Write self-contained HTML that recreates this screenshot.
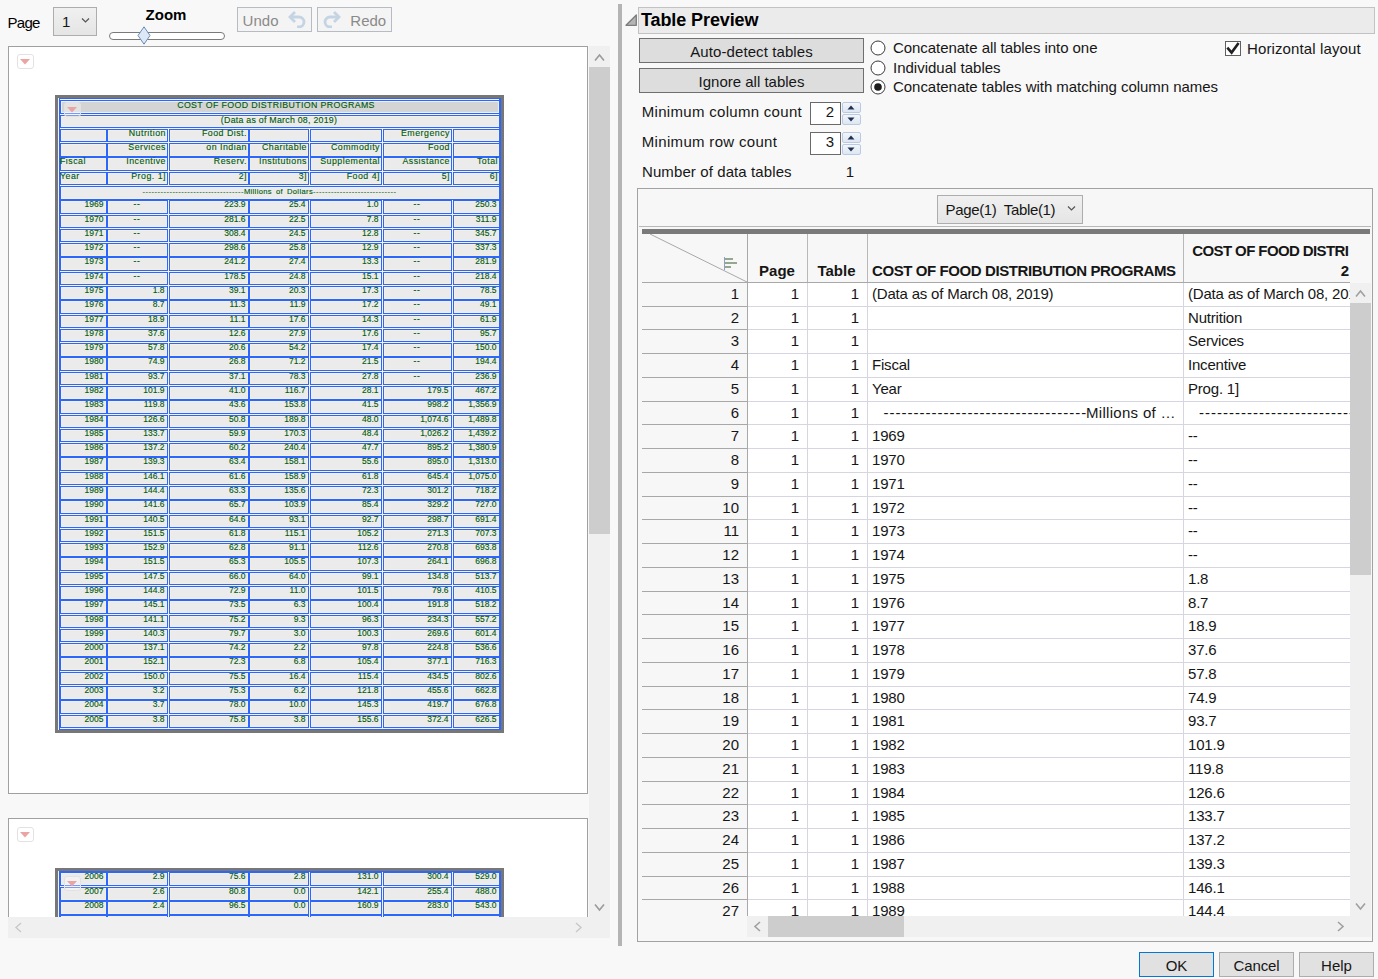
<!DOCTYPE html>
<html><head><meta charset="utf-8"><title>Table Preview</title>
<style>
html,body{margin:0;padding:0;}
body{width:1378px;height:979px;position:relative;overflow:hidden;background:#f8f8f8;font-family:"Liberation Sans",sans-serif;color:#000;}
.t{position:absolute;white-space:nowrap;}
.r{position:absolute;}
.c{position:absolute;box-sizing:border-box;border:1px solid #2b66ff;box-shadow:inset 0 0 0 1px #f1efe6;background:#ebebeb;}
</style></head><body>
<div class="t" style="top:15.10px;font-size:15px;line-height:15px;color:#000;letter-spacing:-0.7px;left:7.5px;">Page</div>
<div class="r" style="left:53px;top:7px;width:44px;height:29px;box-sizing:border-box;border:1px solid #adadad;background:linear-gradient(#f0f0f0,#e5e5e5);"></div>
<div class="t" style="top:14.30px;font-size:15px;line-height:15px;color:#161616;left:62px;">1</div>
<svg class="r" style="left:81px;top:17px" width="9" height="7" viewBox="0 0 9 7"><path d="M1 1.5 L4.5 5 L8 1.5" fill="none" stroke="#555" stroke-width="1.2"/></svg>
<div class="t" style="top:6.60px;font-size:15px;line-height:15px;color:#000;font-weight:bold;left:145.6px;">Zoom</div>
<div class="r" style="left:109px;top:32px;width:116px;height:8px;box-sizing:border-box;border:1px solid #7a7a7a;border-radius:4px;background:#fff;"></div>
<svg class="r" style="left:137px;top:26px" width="14" height="19" viewBox="0 0 14 19"><path d="M7 0.8 L13 9.5 L7 18.2 L1 9.5 Z" fill="#dce8f6" stroke="#6b8cb6" stroke-width="1"/></svg>
<div class="r" style="left:237px;top:7px;width:75px;height:25px;box-sizing:border-box;border:1px solid #b6bcc4;background:#f4f4f4;"></div>
<div class="t" style="top:12.50px;font-size:15px;line-height:15px;color:#8a8a8a;letter-spacing:0.1px;left:242.5px;">Undo</div>
<svg class="r" style="left:287px;top:10px" width="20" height="18" viewBox="0 0 20 18"><path d="M8 2 L3 7 L8 12" fill="none" stroke="#c4d4e4" stroke-width="2.8"/><path d="M3.5 7 H12 A5 5 0 0 1 12 17 H10" fill="none" stroke="#c4d4e4" stroke-width="2.8"/></svg>
<div class="r" style="left:317px;top:7px;width:75px;height:25px;box-sizing:border-box;border:1px solid #b6bcc4;background:#f4f4f4;"></div>
<div class="t" style="top:12.50px;font-size:15px;line-height:15px;color:#8a8a8a;left:350.3px;">Redo</div>
<svg class="r" style="left:322px;top:10px" width="20" height="18" viewBox="0 0 20 18"><path d="M12 2 L17 7 L12 12" fill="none" stroke="#c4d4e4" stroke-width="2.8"/><path d="M16.5 7 H8 A5 5 0 0 0 8 17 H10" fill="none" stroke="#c4d4e4" stroke-width="2.8"/></svg>
<div class="r" style="left:8px;top:46px;width:581px;height:871px;overflow:hidden;">
<div class="r" style="left:0px;top:0px;width:580px;height:748px;box-sizing:border-box;border:1px solid #a0a0a0;background:#fff;"></div>
<div class="r" style="left:9px;top:8px;width:17px;height:15px;box-sizing:border-box;border:1px solid #e2e2e2;border-radius:3px;background:rgba(255,255,255,0.35);"></div>
<svg class="r" style="left:12px;top:13px" width="10" height="6" viewBox="0 0 10 6"><path d="M0 0 H10 L5 5.5 Z" fill="#eba4a4"/></svg>
<div class="r" style="left:0px;top:772px;width:580px;height:120px;box-sizing:border-box;border:1px solid #a0a0a0;background:#fff;"></div>
<div class="r" style="left:9px;top:781px;width:17px;height:15px;box-sizing:border-box;border:1px solid #e2e2e2;border-radius:3px;background:rgba(255,255,255,0.35);"></div>
<svg class="r" style="left:12px;top:786px" width="10" height="6" viewBox="0 0 10 6"><path d="M0 0 H10 L5 5.5 Z" fill="#eba4a4"/></svg>
<div class="r" style="left:47px;top:49px;width:449px;height:638px;box-sizing:border-box;border:3px solid #777;background:#f6f2e6;"></div>
<div class="r" style="left:51px;top:52px;width:442px;height:632px;box-sizing:border-box;border:1px solid #2b66ff;border-right-width:2px;"></div>
<div class="c" style="left:52px;top:54px;width:440px;height:14px;background:#d4d4d4"></div>
<div class="t" style="top:54.55px;font-size:8.8px;line-height:8.8px;color:#005a0c;-webkit-text-stroke:0.12px #005a0c;letter-spacing:0.37px;left:-132px;width:800px;text-align:center;">COST OF FOOD DISTRIBUTION PROGRAMS</div>
<div class="c" style="left:52px;top:69px;width:440px;height:13px;background:#ebebeb"></div>
<div class="t" style="top:69.55px;font-size:8.8px;line-height:8.8px;color:#005a0c;-webkit-text-stroke:0.12px #005a0c;letter-spacing:0.25px;left:-129px;width:800px;text-align:center;">(Data as of March 08, 2019)</div>
<div class="c" style="left:52px;top:83px;width:47px;height:13px"></div>
<div class="c" style="left:99px;top:83px;width:61px;height:13px"></div>
<div class="t" style="top:82.75px;font-size:8.8px;line-height:8.8px;color:#005a0c;-webkit-text-stroke:0.12px #005a0c;letter-spacing:0.5px;left:-642.5px;width:800.5px;text-align:right;">Nutrition</div>
<div class="c" style="left:161px;top:83px;width:80px;height:13px"></div>
<div class="t" style="top:82.75px;font-size:8.8px;line-height:8.8px;color:#005a0c;-webkit-text-stroke:0.12px #005a0c;letter-spacing:0.5px;left:-561.5px;width:800.5px;text-align:right;">Food Dist.</div>
<div class="c" style="left:241px;top:83px;width:60px;height:13px"></div>
<div class="c" style="left:302px;top:83px;width:72px;height:13px"></div>
<div class="c" style="left:375px;top:83px;width:69px;height:13px"></div>
<div class="t" style="top:82.75px;font-size:8.8px;line-height:8.8px;color:#005a0c;-webkit-text-stroke:0.12px #005a0c;letter-spacing:0.5px;left:-358.5px;width:800.5px;text-align:right;">Emergency</div>
<div class="c" style="left:445px;top:83px;width:47px;height:13px"></div>
<div class="c" style="left:52px;top:97px;width:47px;height:14px"></div>
<div class="c" style="left:99px;top:97px;width:61px;height:14px"></div>
<div class="t" style="top:96.75px;font-size:8.8px;line-height:8.8px;color:#005a0c;-webkit-text-stroke:0.12px #005a0c;letter-spacing:0.5px;left:-642.5px;width:800.5px;text-align:right;">Services</div>
<div class="c" style="left:161px;top:97px;width:80px;height:14px"></div>
<div class="t" style="top:96.75px;font-size:8.8px;line-height:8.8px;color:#005a0c;-webkit-text-stroke:0.12px #005a0c;letter-spacing:0.5px;left:-561.5px;width:800.5px;text-align:right;">on Indian</div>
<div class="c" style="left:241px;top:97px;width:60px;height:14px"></div>
<div class="t" style="top:96.75px;font-size:8.8px;line-height:8.8px;color:#005a0c;-webkit-text-stroke:0.12px #005a0c;letter-spacing:0.5px;left:-501.5px;width:800.5px;text-align:right;">Charitable</div>
<div class="c" style="left:302px;top:97px;width:72px;height:14px"></div>
<div class="t" style="top:96.75px;font-size:8.8px;line-height:8.8px;color:#005a0c;-webkit-text-stroke:0.12px #005a0c;letter-spacing:0.5px;left:-428.5px;width:800.5px;text-align:right;">Commodity</div>
<div class="c" style="left:375px;top:97px;width:69px;height:14px"></div>
<div class="t" style="top:96.75px;font-size:8.8px;line-height:8.8px;color:#005a0c;-webkit-text-stroke:0.12px #005a0c;letter-spacing:0.5px;left:-358.5px;width:800.5px;text-align:right;">Food</div>
<div class="c" style="left:445px;top:97px;width:47px;height:14px"></div>
<div class="c" style="left:52px;top:111px;width:47px;height:14px"></div>
<div class="t" style="top:110.75px;font-size:8.8px;line-height:8.8px;color:#005a0c;-webkit-text-stroke:0.12px #005a0c;letter-spacing:0.5px;left:52px;">Fiscal</div>
<div class="c" style="left:99px;top:111px;width:61px;height:14px"></div>
<div class="t" style="top:110.75px;font-size:8.8px;line-height:8.8px;color:#005a0c;-webkit-text-stroke:0.12px #005a0c;letter-spacing:0.5px;left:-642.5px;width:800.5px;text-align:right;">Incentive</div>
<div class="c" style="left:161px;top:111px;width:80px;height:14px"></div>
<div class="t" style="top:110.75px;font-size:8.8px;line-height:8.8px;color:#005a0c;-webkit-text-stroke:0.12px #005a0c;letter-spacing:0.5px;left:-561.5px;width:800.5px;text-align:right;">Reserv.</div>
<div class="c" style="left:241px;top:111px;width:60px;height:14px"></div>
<div class="t" style="top:110.75px;font-size:8.8px;line-height:8.8px;color:#005a0c;-webkit-text-stroke:0.12px #005a0c;letter-spacing:0.5px;left:-501.5px;width:800.5px;text-align:right;">Institutions</div>
<div class="c" style="left:302px;top:111px;width:72px;height:14px"></div>
<div class="t" style="top:110.75px;font-size:8.8px;line-height:8.8px;color:#005a0c;-webkit-text-stroke:0.12px #005a0c;letter-spacing:0.5px;left:-428.5px;width:800.5px;text-align:right;">Supplemental</div>
<div class="c" style="left:375px;top:111px;width:69px;height:14px"></div>
<div class="t" style="top:110.75px;font-size:8.8px;line-height:8.8px;color:#005a0c;-webkit-text-stroke:0.12px #005a0c;letter-spacing:0.5px;left:-358.5px;width:800.5px;text-align:right;">Assistance</div>
<div class="c" style="left:445px;top:111px;width:47px;height:14px"></div>
<div class="t" style="top:110.75px;font-size:8.8px;line-height:8.8px;color:#005a0c;-webkit-text-stroke:0.12px #005a0c;letter-spacing:0.5px;left:-310.5px;width:800.5px;text-align:right;">Total</div>
<div class="c" style="left:52px;top:126px;width:47px;height:13px"></div>
<div class="t" style="top:125.75px;font-size:8.8px;line-height:8.8px;color:#005a0c;-webkit-text-stroke:0.12px #005a0c;letter-spacing:0.5px;left:52px;">Year</div>
<div class="c" style="left:99px;top:126px;width:61px;height:13px"></div>
<div class="t" style="top:125.75px;font-size:8.8px;line-height:8.8px;color:#005a0c;-webkit-text-stroke:0.12px #005a0c;letter-spacing:0.5px;left:-642.5px;width:800.5px;text-align:right;">Prog. 1]</div>
<div class="c" style="left:161px;top:126px;width:80px;height:13px"></div>
<div class="t" style="top:125.75px;font-size:8.8px;line-height:8.8px;color:#005a0c;-webkit-text-stroke:0.12px #005a0c;letter-spacing:0.5px;left:-561.5px;width:800.5px;text-align:right;">2]</div>
<div class="c" style="left:241px;top:126px;width:60px;height:13px"></div>
<div class="t" style="top:125.75px;font-size:8.8px;line-height:8.8px;color:#005a0c;-webkit-text-stroke:0.12px #005a0c;letter-spacing:0.5px;left:-501.5px;width:800.5px;text-align:right;">3]</div>
<div class="c" style="left:302px;top:126px;width:72px;height:13px"></div>
<div class="t" style="top:125.75px;font-size:8.8px;line-height:8.8px;color:#005a0c;-webkit-text-stroke:0.12px #005a0c;letter-spacing:0.5px;left:-428.5px;width:800.5px;text-align:right;">Food 4]</div>
<div class="c" style="left:375px;top:126px;width:69px;height:13px"></div>
<div class="t" style="top:125.75px;font-size:8.8px;line-height:8.8px;color:#005a0c;-webkit-text-stroke:0.12px #005a0c;letter-spacing:0.5px;left:-358.5px;width:800.5px;text-align:right;">5]</div>
<div class="c" style="left:445px;top:126px;width:47px;height:13px"></div>
<div class="t" style="top:125.75px;font-size:8.8px;line-height:8.8px;color:#005a0c;-webkit-text-stroke:0.12px #005a0c;letter-spacing:0.5px;left:-310.5px;width:800.5px;text-align:right;">6]</div>
<div class="c" style="left:52px;top:140px;width:440px;height:14px;background:#ebebeb"></div>
<div class="t" style="top:141.57px;font-size:7.6px;line-height:7.6px;color:#005a0c;-webkit-text-stroke:0.12px #005a0c;left:134.6px;"><span style="letter-spacing:0.45px">----------------------------------</span><span style="letter-spacing:0.35px;word-spacing:1.5px">Millions of Dollars</span><span style="letter-spacing:0.45px">----------------------------</span></div>
<div class="c" style="left:52px;top:154px;width:47px;height:14px"></div>
<div class="t" style="top:153.80px;font-size:8.5px;line-height:8.5px;color:#005a0c;-webkit-text-stroke:0.12px #005a0c;left:-704.5px;width:800px;text-align:right;">1969</div>
<div class="c" style="left:99px;top:154px;width:61px;height:14px"></div>
<div class="t" style="top:153.80px;font-size:8.5px;line-height:8.5px;color:#005a0c;-webkit-text-stroke:0.12px #005a0c;letter-spacing:0.6px;left:-271.0px;width:800px;text-align:center;">--</div>
<div class="c" style="left:161px;top:154px;width:80px;height:14px"></div>
<div class="t" style="top:153.80px;font-size:8.5px;line-height:8.5px;color:#005a0c;-webkit-text-stroke:0.12px #005a0c;left:-562.5px;width:800px;text-align:right;">223.9</div>
<div class="c" style="left:241px;top:154px;width:60px;height:14px"></div>
<div class="t" style="top:153.80px;font-size:8.5px;line-height:8.5px;color:#005a0c;-webkit-text-stroke:0.12px #005a0c;left:-502.5px;width:800px;text-align:right;">25.4</div>
<div class="c" style="left:302px;top:154px;width:72px;height:14px"></div>
<div class="t" style="top:153.80px;font-size:8.5px;line-height:8.5px;color:#005a0c;-webkit-text-stroke:0.12px #005a0c;left:-429.5px;width:800px;text-align:right;">1.0</div>
<div class="c" style="left:375px;top:154px;width:69px;height:14px"></div>
<div class="t" style="top:153.80px;font-size:8.5px;line-height:8.5px;color:#005a0c;-webkit-text-stroke:0.12px #005a0c;letter-spacing:0.6px;left:9.0px;width:800px;text-align:center;">--</div>
<div class="c" style="left:445px;top:154px;width:47px;height:14px"></div>
<div class="t" style="top:153.80px;font-size:8.5px;line-height:8.5px;color:#005a0c;-webkit-text-stroke:0.12px #005a0c;left:-311.5px;width:800px;text-align:right;">250.3</div>
<div class="c" style="left:52px;top:169px;width:47px;height:13px"></div>
<div class="t" style="top:168.80px;font-size:8.5px;line-height:8.5px;color:#005a0c;-webkit-text-stroke:0.12px #005a0c;left:-704.5px;width:800px;text-align:right;">1970</div>
<div class="c" style="left:99px;top:169px;width:61px;height:13px"></div>
<div class="t" style="top:168.80px;font-size:8.5px;line-height:8.5px;color:#005a0c;-webkit-text-stroke:0.12px #005a0c;letter-spacing:0.6px;left:-271.0px;width:800px;text-align:center;">--</div>
<div class="c" style="left:161px;top:169px;width:80px;height:13px"></div>
<div class="t" style="top:168.80px;font-size:8.5px;line-height:8.5px;color:#005a0c;-webkit-text-stroke:0.12px #005a0c;left:-562.5px;width:800px;text-align:right;">281.6</div>
<div class="c" style="left:241px;top:169px;width:60px;height:13px"></div>
<div class="t" style="top:168.80px;font-size:8.5px;line-height:8.5px;color:#005a0c;-webkit-text-stroke:0.12px #005a0c;left:-502.5px;width:800px;text-align:right;">22.5</div>
<div class="c" style="left:302px;top:169px;width:72px;height:13px"></div>
<div class="t" style="top:168.80px;font-size:8.5px;line-height:8.5px;color:#005a0c;-webkit-text-stroke:0.12px #005a0c;left:-429.5px;width:800px;text-align:right;">7.8</div>
<div class="c" style="left:375px;top:169px;width:69px;height:13px"></div>
<div class="t" style="top:168.80px;font-size:8.5px;line-height:8.5px;color:#005a0c;-webkit-text-stroke:0.12px #005a0c;letter-spacing:0.6px;left:9.0px;width:800px;text-align:center;">--</div>
<div class="c" style="left:445px;top:169px;width:47px;height:13px"></div>
<div class="t" style="top:168.80px;font-size:8.5px;line-height:8.5px;color:#005a0c;-webkit-text-stroke:0.12px #005a0c;left:-311.5px;width:800px;text-align:right;">311.9</div>
<div class="c" style="left:52px;top:183px;width:47px;height:13px"></div>
<div class="t" style="top:182.80px;font-size:8.5px;line-height:8.5px;color:#005a0c;-webkit-text-stroke:0.12px #005a0c;left:-704.5px;width:800px;text-align:right;">1971</div>
<div class="c" style="left:99px;top:183px;width:61px;height:13px"></div>
<div class="t" style="top:182.80px;font-size:8.5px;line-height:8.5px;color:#005a0c;-webkit-text-stroke:0.12px #005a0c;letter-spacing:0.6px;left:-271.0px;width:800px;text-align:center;">--</div>
<div class="c" style="left:161px;top:183px;width:80px;height:13px"></div>
<div class="t" style="top:182.80px;font-size:8.5px;line-height:8.5px;color:#005a0c;-webkit-text-stroke:0.12px #005a0c;left:-562.5px;width:800px;text-align:right;">308.4</div>
<div class="c" style="left:241px;top:183px;width:60px;height:13px"></div>
<div class="t" style="top:182.80px;font-size:8.5px;line-height:8.5px;color:#005a0c;-webkit-text-stroke:0.12px #005a0c;left:-502.5px;width:800px;text-align:right;">24.5</div>
<div class="c" style="left:302px;top:183px;width:72px;height:13px"></div>
<div class="t" style="top:182.80px;font-size:8.5px;line-height:8.5px;color:#005a0c;-webkit-text-stroke:0.12px #005a0c;left:-429.5px;width:800px;text-align:right;">12.8</div>
<div class="c" style="left:375px;top:183px;width:69px;height:13px"></div>
<div class="t" style="top:182.80px;font-size:8.5px;line-height:8.5px;color:#005a0c;-webkit-text-stroke:0.12px #005a0c;letter-spacing:0.6px;left:9.0px;width:800px;text-align:center;">--</div>
<div class="c" style="left:445px;top:183px;width:47px;height:13px"></div>
<div class="t" style="top:182.80px;font-size:8.5px;line-height:8.5px;color:#005a0c;-webkit-text-stroke:0.12px #005a0c;left:-311.5px;width:800px;text-align:right;">345.7</div>
<div class="c" style="left:52px;top:197px;width:47px;height:14px"></div>
<div class="t" style="top:196.80px;font-size:8.5px;line-height:8.5px;color:#005a0c;-webkit-text-stroke:0.12px #005a0c;left:-704.5px;width:800px;text-align:right;">1972</div>
<div class="c" style="left:99px;top:197px;width:61px;height:14px"></div>
<div class="t" style="top:196.80px;font-size:8.5px;line-height:8.5px;color:#005a0c;-webkit-text-stroke:0.12px #005a0c;letter-spacing:0.6px;left:-271.0px;width:800px;text-align:center;">--</div>
<div class="c" style="left:161px;top:197px;width:80px;height:14px"></div>
<div class="t" style="top:196.80px;font-size:8.5px;line-height:8.5px;color:#005a0c;-webkit-text-stroke:0.12px #005a0c;left:-562.5px;width:800px;text-align:right;">298.6</div>
<div class="c" style="left:241px;top:197px;width:60px;height:14px"></div>
<div class="t" style="top:196.80px;font-size:8.5px;line-height:8.5px;color:#005a0c;-webkit-text-stroke:0.12px #005a0c;left:-502.5px;width:800px;text-align:right;">25.8</div>
<div class="c" style="left:302px;top:197px;width:72px;height:14px"></div>
<div class="t" style="top:196.80px;font-size:8.5px;line-height:8.5px;color:#005a0c;-webkit-text-stroke:0.12px #005a0c;left:-429.5px;width:800px;text-align:right;">12.9</div>
<div class="c" style="left:375px;top:197px;width:69px;height:14px"></div>
<div class="t" style="top:196.80px;font-size:8.5px;line-height:8.5px;color:#005a0c;-webkit-text-stroke:0.12px #005a0c;letter-spacing:0.6px;left:9.0px;width:800px;text-align:center;">--</div>
<div class="c" style="left:445px;top:197px;width:47px;height:14px"></div>
<div class="t" style="top:196.80px;font-size:8.5px;line-height:8.5px;color:#005a0c;-webkit-text-stroke:0.12px #005a0c;left:-311.5px;width:800px;text-align:right;">337.3</div>
<div class="c" style="left:52px;top:211px;width:47px;height:14px"></div>
<div class="t" style="top:210.80px;font-size:8.5px;line-height:8.5px;color:#005a0c;-webkit-text-stroke:0.12px #005a0c;left:-704.5px;width:800px;text-align:right;">1973</div>
<div class="c" style="left:99px;top:211px;width:61px;height:14px"></div>
<div class="t" style="top:210.80px;font-size:8.5px;line-height:8.5px;color:#005a0c;-webkit-text-stroke:0.12px #005a0c;letter-spacing:0.6px;left:-271.0px;width:800px;text-align:center;">--</div>
<div class="c" style="left:161px;top:211px;width:80px;height:14px"></div>
<div class="t" style="top:210.80px;font-size:8.5px;line-height:8.5px;color:#005a0c;-webkit-text-stroke:0.12px #005a0c;left:-562.5px;width:800px;text-align:right;">241.2</div>
<div class="c" style="left:241px;top:211px;width:60px;height:14px"></div>
<div class="t" style="top:210.80px;font-size:8.5px;line-height:8.5px;color:#005a0c;-webkit-text-stroke:0.12px #005a0c;left:-502.5px;width:800px;text-align:right;">27.4</div>
<div class="c" style="left:302px;top:211px;width:72px;height:14px"></div>
<div class="t" style="top:210.80px;font-size:8.5px;line-height:8.5px;color:#005a0c;-webkit-text-stroke:0.12px #005a0c;left:-429.5px;width:800px;text-align:right;">13.3</div>
<div class="c" style="left:375px;top:211px;width:69px;height:14px"></div>
<div class="t" style="top:210.80px;font-size:8.5px;line-height:8.5px;color:#005a0c;-webkit-text-stroke:0.12px #005a0c;letter-spacing:0.6px;left:9.0px;width:800px;text-align:center;">--</div>
<div class="c" style="left:445px;top:211px;width:47px;height:14px"></div>
<div class="t" style="top:210.80px;font-size:8.5px;line-height:8.5px;color:#005a0c;-webkit-text-stroke:0.12px #005a0c;left:-311.5px;width:800px;text-align:right;">281.9</div>
<div class="c" style="left:52px;top:226px;width:47px;height:13px"></div>
<div class="t" style="top:225.80px;font-size:8.5px;line-height:8.5px;color:#005a0c;-webkit-text-stroke:0.12px #005a0c;left:-704.5px;width:800px;text-align:right;">1974</div>
<div class="c" style="left:99px;top:226px;width:61px;height:13px"></div>
<div class="t" style="top:225.80px;font-size:8.5px;line-height:8.5px;color:#005a0c;-webkit-text-stroke:0.12px #005a0c;letter-spacing:0.6px;left:-271.0px;width:800px;text-align:center;">--</div>
<div class="c" style="left:161px;top:226px;width:80px;height:13px"></div>
<div class="t" style="top:225.80px;font-size:8.5px;line-height:8.5px;color:#005a0c;-webkit-text-stroke:0.12px #005a0c;left:-562.5px;width:800px;text-align:right;">178.5</div>
<div class="c" style="left:241px;top:226px;width:60px;height:13px"></div>
<div class="t" style="top:225.80px;font-size:8.5px;line-height:8.5px;color:#005a0c;-webkit-text-stroke:0.12px #005a0c;left:-502.5px;width:800px;text-align:right;">24.8</div>
<div class="c" style="left:302px;top:226px;width:72px;height:13px"></div>
<div class="t" style="top:225.80px;font-size:8.5px;line-height:8.5px;color:#005a0c;-webkit-text-stroke:0.12px #005a0c;left:-429.5px;width:800px;text-align:right;">15.1</div>
<div class="c" style="left:375px;top:226px;width:69px;height:13px"></div>
<div class="t" style="top:225.80px;font-size:8.5px;line-height:8.5px;color:#005a0c;-webkit-text-stroke:0.12px #005a0c;letter-spacing:0.6px;left:9.0px;width:800px;text-align:center;">--</div>
<div class="c" style="left:445px;top:226px;width:47px;height:13px"></div>
<div class="t" style="top:225.80px;font-size:8.5px;line-height:8.5px;color:#005a0c;-webkit-text-stroke:0.12px #005a0c;left:-311.5px;width:800px;text-align:right;">218.4</div>
<div class="c" style="left:52px;top:240px;width:47px;height:14px"></div>
<div class="t" style="top:239.80px;font-size:8.5px;line-height:8.5px;color:#005a0c;-webkit-text-stroke:0.12px #005a0c;left:-704.5px;width:800px;text-align:right;">1975</div>
<div class="c" style="left:99px;top:240px;width:61px;height:14px"></div>
<div class="t" style="top:239.80px;font-size:8.5px;line-height:8.5px;color:#005a0c;-webkit-text-stroke:0.12px #005a0c;left:-643.5px;width:800px;text-align:right;">1.8</div>
<div class="c" style="left:161px;top:240px;width:80px;height:14px"></div>
<div class="t" style="top:239.80px;font-size:8.5px;line-height:8.5px;color:#005a0c;-webkit-text-stroke:0.12px #005a0c;left:-562.5px;width:800px;text-align:right;">39.1</div>
<div class="c" style="left:241px;top:240px;width:60px;height:14px"></div>
<div class="t" style="top:239.80px;font-size:8.5px;line-height:8.5px;color:#005a0c;-webkit-text-stroke:0.12px #005a0c;left:-502.5px;width:800px;text-align:right;">20.3</div>
<div class="c" style="left:302px;top:240px;width:72px;height:14px"></div>
<div class="t" style="top:239.80px;font-size:8.5px;line-height:8.5px;color:#005a0c;-webkit-text-stroke:0.12px #005a0c;left:-429.5px;width:800px;text-align:right;">17.3</div>
<div class="c" style="left:375px;top:240px;width:69px;height:14px"></div>
<div class="t" style="top:239.80px;font-size:8.5px;line-height:8.5px;color:#005a0c;-webkit-text-stroke:0.12px #005a0c;letter-spacing:0.6px;left:9.0px;width:800px;text-align:center;">--</div>
<div class="c" style="left:445px;top:240px;width:47px;height:14px"></div>
<div class="t" style="top:239.80px;font-size:8.5px;line-height:8.5px;color:#005a0c;-webkit-text-stroke:0.12px #005a0c;left:-311.5px;width:800px;text-align:right;">78.5</div>
<div class="c" style="left:52px;top:254px;width:47px;height:14px"></div>
<div class="t" style="top:253.80px;font-size:8.5px;line-height:8.5px;color:#005a0c;-webkit-text-stroke:0.12px #005a0c;left:-704.5px;width:800px;text-align:right;">1976</div>
<div class="c" style="left:99px;top:254px;width:61px;height:14px"></div>
<div class="t" style="top:253.80px;font-size:8.5px;line-height:8.5px;color:#005a0c;-webkit-text-stroke:0.12px #005a0c;left:-643.5px;width:800px;text-align:right;">8.7</div>
<div class="c" style="left:161px;top:254px;width:80px;height:14px"></div>
<div class="t" style="top:253.80px;font-size:8.5px;line-height:8.5px;color:#005a0c;-webkit-text-stroke:0.12px #005a0c;left:-562.5px;width:800px;text-align:right;">11.3</div>
<div class="c" style="left:241px;top:254px;width:60px;height:14px"></div>
<div class="t" style="top:253.80px;font-size:8.5px;line-height:8.5px;color:#005a0c;-webkit-text-stroke:0.12px #005a0c;left:-502.5px;width:800px;text-align:right;">11.9</div>
<div class="c" style="left:302px;top:254px;width:72px;height:14px"></div>
<div class="t" style="top:253.80px;font-size:8.5px;line-height:8.5px;color:#005a0c;-webkit-text-stroke:0.12px #005a0c;left:-429.5px;width:800px;text-align:right;">17.2</div>
<div class="c" style="left:375px;top:254px;width:69px;height:14px"></div>
<div class="t" style="top:253.80px;font-size:8.5px;line-height:8.5px;color:#005a0c;-webkit-text-stroke:0.12px #005a0c;letter-spacing:0.6px;left:9.0px;width:800px;text-align:center;">--</div>
<div class="c" style="left:445px;top:254px;width:47px;height:14px"></div>
<div class="t" style="top:253.80px;font-size:8.5px;line-height:8.5px;color:#005a0c;-webkit-text-stroke:0.12px #005a0c;left:-311.5px;width:800px;text-align:right;">49.1</div>
<div class="c" style="left:52px;top:269px;width:47px;height:13px"></div>
<div class="t" style="top:268.80px;font-size:8.5px;line-height:8.5px;color:#005a0c;-webkit-text-stroke:0.12px #005a0c;left:-704.5px;width:800px;text-align:right;">1977</div>
<div class="c" style="left:99px;top:269px;width:61px;height:13px"></div>
<div class="t" style="top:268.80px;font-size:8.5px;line-height:8.5px;color:#005a0c;-webkit-text-stroke:0.12px #005a0c;left:-643.5px;width:800px;text-align:right;">18.9</div>
<div class="c" style="left:161px;top:269px;width:80px;height:13px"></div>
<div class="t" style="top:268.80px;font-size:8.5px;line-height:8.5px;color:#005a0c;-webkit-text-stroke:0.12px #005a0c;left:-562.5px;width:800px;text-align:right;">11.1</div>
<div class="c" style="left:241px;top:269px;width:60px;height:13px"></div>
<div class="t" style="top:268.80px;font-size:8.5px;line-height:8.5px;color:#005a0c;-webkit-text-stroke:0.12px #005a0c;left:-502.5px;width:800px;text-align:right;">17.6</div>
<div class="c" style="left:302px;top:269px;width:72px;height:13px"></div>
<div class="t" style="top:268.80px;font-size:8.5px;line-height:8.5px;color:#005a0c;-webkit-text-stroke:0.12px #005a0c;left:-429.5px;width:800px;text-align:right;">14.3</div>
<div class="c" style="left:375px;top:269px;width:69px;height:13px"></div>
<div class="t" style="top:268.80px;font-size:8.5px;line-height:8.5px;color:#005a0c;-webkit-text-stroke:0.12px #005a0c;letter-spacing:0.6px;left:9.0px;width:800px;text-align:center;">--</div>
<div class="c" style="left:445px;top:269px;width:47px;height:13px"></div>
<div class="t" style="top:268.80px;font-size:8.5px;line-height:8.5px;color:#005a0c;-webkit-text-stroke:0.12px #005a0c;left:-311.5px;width:800px;text-align:right;">61.9</div>
<div class="c" style="left:52px;top:283px;width:47px;height:13px"></div>
<div class="t" style="top:282.80px;font-size:8.5px;line-height:8.5px;color:#005a0c;-webkit-text-stroke:0.12px #005a0c;left:-704.5px;width:800px;text-align:right;">1978</div>
<div class="c" style="left:99px;top:283px;width:61px;height:13px"></div>
<div class="t" style="top:282.80px;font-size:8.5px;line-height:8.5px;color:#005a0c;-webkit-text-stroke:0.12px #005a0c;left:-643.5px;width:800px;text-align:right;">37.6</div>
<div class="c" style="left:161px;top:283px;width:80px;height:13px"></div>
<div class="t" style="top:282.80px;font-size:8.5px;line-height:8.5px;color:#005a0c;-webkit-text-stroke:0.12px #005a0c;left:-562.5px;width:800px;text-align:right;">12.6</div>
<div class="c" style="left:241px;top:283px;width:60px;height:13px"></div>
<div class="t" style="top:282.80px;font-size:8.5px;line-height:8.5px;color:#005a0c;-webkit-text-stroke:0.12px #005a0c;left:-502.5px;width:800px;text-align:right;">27.9</div>
<div class="c" style="left:302px;top:283px;width:72px;height:13px"></div>
<div class="t" style="top:282.80px;font-size:8.5px;line-height:8.5px;color:#005a0c;-webkit-text-stroke:0.12px #005a0c;left:-429.5px;width:800px;text-align:right;">17.6</div>
<div class="c" style="left:375px;top:283px;width:69px;height:13px"></div>
<div class="t" style="top:282.80px;font-size:8.5px;line-height:8.5px;color:#005a0c;-webkit-text-stroke:0.12px #005a0c;letter-spacing:0.6px;left:9.0px;width:800px;text-align:center;">--</div>
<div class="c" style="left:445px;top:283px;width:47px;height:13px"></div>
<div class="t" style="top:282.80px;font-size:8.5px;line-height:8.5px;color:#005a0c;-webkit-text-stroke:0.12px #005a0c;left:-311.5px;width:800px;text-align:right;">95.7</div>
<div class="c" style="left:52px;top:297px;width:47px;height:14px"></div>
<div class="t" style="top:296.80px;font-size:8.5px;line-height:8.5px;color:#005a0c;-webkit-text-stroke:0.12px #005a0c;left:-704.5px;width:800px;text-align:right;">1979</div>
<div class="c" style="left:99px;top:297px;width:61px;height:14px"></div>
<div class="t" style="top:296.80px;font-size:8.5px;line-height:8.5px;color:#005a0c;-webkit-text-stroke:0.12px #005a0c;left:-643.5px;width:800px;text-align:right;">57.8</div>
<div class="c" style="left:161px;top:297px;width:80px;height:14px"></div>
<div class="t" style="top:296.80px;font-size:8.5px;line-height:8.5px;color:#005a0c;-webkit-text-stroke:0.12px #005a0c;left:-562.5px;width:800px;text-align:right;">20.6</div>
<div class="c" style="left:241px;top:297px;width:60px;height:14px"></div>
<div class="t" style="top:296.80px;font-size:8.5px;line-height:8.5px;color:#005a0c;-webkit-text-stroke:0.12px #005a0c;left:-502.5px;width:800px;text-align:right;">54.2</div>
<div class="c" style="left:302px;top:297px;width:72px;height:14px"></div>
<div class="t" style="top:296.80px;font-size:8.5px;line-height:8.5px;color:#005a0c;-webkit-text-stroke:0.12px #005a0c;left:-429.5px;width:800px;text-align:right;">17.4</div>
<div class="c" style="left:375px;top:297px;width:69px;height:14px"></div>
<div class="t" style="top:296.80px;font-size:8.5px;line-height:8.5px;color:#005a0c;-webkit-text-stroke:0.12px #005a0c;letter-spacing:0.6px;left:9.0px;width:800px;text-align:center;">--</div>
<div class="c" style="left:445px;top:297px;width:47px;height:14px"></div>
<div class="t" style="top:296.80px;font-size:8.5px;line-height:8.5px;color:#005a0c;-webkit-text-stroke:0.12px #005a0c;left:-311.5px;width:800px;text-align:right;">150.0</div>
<div class="c" style="left:52px;top:311px;width:47px;height:14px"></div>
<div class="t" style="top:310.80px;font-size:8.5px;line-height:8.5px;color:#005a0c;-webkit-text-stroke:0.12px #005a0c;left:-704.5px;width:800px;text-align:right;">1980</div>
<div class="c" style="left:99px;top:311px;width:61px;height:14px"></div>
<div class="t" style="top:310.80px;font-size:8.5px;line-height:8.5px;color:#005a0c;-webkit-text-stroke:0.12px #005a0c;left:-643.5px;width:800px;text-align:right;">74.9</div>
<div class="c" style="left:161px;top:311px;width:80px;height:14px"></div>
<div class="t" style="top:310.80px;font-size:8.5px;line-height:8.5px;color:#005a0c;-webkit-text-stroke:0.12px #005a0c;left:-562.5px;width:800px;text-align:right;">26.8</div>
<div class="c" style="left:241px;top:311px;width:60px;height:14px"></div>
<div class="t" style="top:310.80px;font-size:8.5px;line-height:8.5px;color:#005a0c;-webkit-text-stroke:0.12px #005a0c;left:-502.5px;width:800px;text-align:right;">71.2</div>
<div class="c" style="left:302px;top:311px;width:72px;height:14px"></div>
<div class="t" style="top:310.80px;font-size:8.5px;line-height:8.5px;color:#005a0c;-webkit-text-stroke:0.12px #005a0c;left:-429.5px;width:800px;text-align:right;">21.5</div>
<div class="c" style="left:375px;top:311px;width:69px;height:14px"></div>
<div class="t" style="top:310.80px;font-size:8.5px;line-height:8.5px;color:#005a0c;-webkit-text-stroke:0.12px #005a0c;letter-spacing:0.6px;left:9.0px;width:800px;text-align:center;">--</div>
<div class="c" style="left:445px;top:311px;width:47px;height:14px"></div>
<div class="t" style="top:310.80px;font-size:8.5px;line-height:8.5px;color:#005a0c;-webkit-text-stroke:0.12px #005a0c;left:-311.5px;width:800px;text-align:right;">194.4</div>
<div class="c" style="left:52px;top:326px;width:47px;height:13px"></div>
<div class="t" style="top:325.80px;font-size:8.5px;line-height:8.5px;color:#005a0c;-webkit-text-stroke:0.12px #005a0c;left:-704.5px;width:800px;text-align:right;">1981</div>
<div class="c" style="left:99px;top:326px;width:61px;height:13px"></div>
<div class="t" style="top:325.80px;font-size:8.5px;line-height:8.5px;color:#005a0c;-webkit-text-stroke:0.12px #005a0c;left:-643.5px;width:800px;text-align:right;">93.7</div>
<div class="c" style="left:161px;top:326px;width:80px;height:13px"></div>
<div class="t" style="top:325.80px;font-size:8.5px;line-height:8.5px;color:#005a0c;-webkit-text-stroke:0.12px #005a0c;left:-562.5px;width:800px;text-align:right;">37.1</div>
<div class="c" style="left:241px;top:326px;width:60px;height:13px"></div>
<div class="t" style="top:325.80px;font-size:8.5px;line-height:8.5px;color:#005a0c;-webkit-text-stroke:0.12px #005a0c;left:-502.5px;width:800px;text-align:right;">78.3</div>
<div class="c" style="left:302px;top:326px;width:72px;height:13px"></div>
<div class="t" style="top:325.80px;font-size:8.5px;line-height:8.5px;color:#005a0c;-webkit-text-stroke:0.12px #005a0c;left:-429.5px;width:800px;text-align:right;">27.8</div>
<div class="c" style="left:375px;top:326px;width:69px;height:13px"></div>
<div class="t" style="top:325.80px;font-size:8.5px;line-height:8.5px;color:#005a0c;-webkit-text-stroke:0.12px #005a0c;letter-spacing:0.6px;left:9.0px;width:800px;text-align:center;">--</div>
<div class="c" style="left:445px;top:326px;width:47px;height:13px"></div>
<div class="t" style="top:325.80px;font-size:8.5px;line-height:8.5px;color:#005a0c;-webkit-text-stroke:0.12px #005a0c;left:-311.5px;width:800px;text-align:right;">236.9</div>
<div class="c" style="left:52px;top:340px;width:47px;height:14px"></div>
<div class="t" style="top:339.80px;font-size:8.5px;line-height:8.5px;color:#005a0c;-webkit-text-stroke:0.12px #005a0c;left:-704.5px;width:800px;text-align:right;">1982</div>
<div class="c" style="left:99px;top:340px;width:61px;height:14px"></div>
<div class="t" style="top:339.80px;font-size:8.5px;line-height:8.5px;color:#005a0c;-webkit-text-stroke:0.12px #005a0c;left:-643.5px;width:800px;text-align:right;">101.9</div>
<div class="c" style="left:161px;top:340px;width:80px;height:14px"></div>
<div class="t" style="top:339.80px;font-size:8.5px;line-height:8.5px;color:#005a0c;-webkit-text-stroke:0.12px #005a0c;left:-562.5px;width:800px;text-align:right;">41.0</div>
<div class="c" style="left:241px;top:340px;width:60px;height:14px"></div>
<div class="t" style="top:339.80px;font-size:8.5px;line-height:8.5px;color:#005a0c;-webkit-text-stroke:0.12px #005a0c;left:-502.5px;width:800px;text-align:right;">116.7</div>
<div class="c" style="left:302px;top:340px;width:72px;height:14px"></div>
<div class="t" style="top:339.80px;font-size:8.5px;line-height:8.5px;color:#005a0c;-webkit-text-stroke:0.12px #005a0c;left:-429.5px;width:800px;text-align:right;">28.1</div>
<div class="c" style="left:375px;top:340px;width:69px;height:14px"></div>
<div class="t" style="top:339.80px;font-size:8.5px;line-height:8.5px;color:#005a0c;-webkit-text-stroke:0.12px #005a0c;left:-359.5px;width:800px;text-align:right;">179.5</div>
<div class="c" style="left:445px;top:340px;width:47px;height:14px"></div>
<div class="t" style="top:339.80px;font-size:8.5px;line-height:8.5px;color:#005a0c;-webkit-text-stroke:0.12px #005a0c;left:-311.5px;width:800px;text-align:right;">467.2</div>
<div class="c" style="left:52px;top:354px;width:47px;height:14px"></div>
<div class="t" style="top:353.80px;font-size:8.5px;line-height:8.5px;color:#005a0c;-webkit-text-stroke:0.12px #005a0c;left:-704.5px;width:800px;text-align:right;">1983</div>
<div class="c" style="left:99px;top:354px;width:61px;height:14px"></div>
<div class="t" style="top:353.80px;font-size:8.5px;line-height:8.5px;color:#005a0c;-webkit-text-stroke:0.12px #005a0c;left:-643.5px;width:800px;text-align:right;">119.8</div>
<div class="c" style="left:161px;top:354px;width:80px;height:14px"></div>
<div class="t" style="top:353.80px;font-size:8.5px;line-height:8.5px;color:#005a0c;-webkit-text-stroke:0.12px #005a0c;left:-562.5px;width:800px;text-align:right;">43.6</div>
<div class="c" style="left:241px;top:354px;width:60px;height:14px"></div>
<div class="t" style="top:353.80px;font-size:8.5px;line-height:8.5px;color:#005a0c;-webkit-text-stroke:0.12px #005a0c;left:-502.5px;width:800px;text-align:right;">153.8</div>
<div class="c" style="left:302px;top:354px;width:72px;height:14px"></div>
<div class="t" style="top:353.80px;font-size:8.5px;line-height:8.5px;color:#005a0c;-webkit-text-stroke:0.12px #005a0c;left:-429.5px;width:800px;text-align:right;">41.5</div>
<div class="c" style="left:375px;top:354px;width:69px;height:14px"></div>
<div class="t" style="top:353.80px;font-size:8.5px;line-height:8.5px;color:#005a0c;-webkit-text-stroke:0.12px #005a0c;left:-359.5px;width:800px;text-align:right;">998.2</div>
<div class="c" style="left:445px;top:354px;width:47px;height:14px"></div>
<div class="t" style="top:353.80px;font-size:8.5px;line-height:8.5px;color:#005a0c;-webkit-text-stroke:0.12px #005a0c;left:-311.5px;width:800px;text-align:right;">1,356.9</div>
<div class="c" style="left:52px;top:369px;width:47px;height:13px"></div>
<div class="t" style="top:368.80px;font-size:8.5px;line-height:8.5px;color:#005a0c;-webkit-text-stroke:0.12px #005a0c;left:-704.5px;width:800px;text-align:right;">1984</div>
<div class="c" style="left:99px;top:369px;width:61px;height:13px"></div>
<div class="t" style="top:368.80px;font-size:8.5px;line-height:8.5px;color:#005a0c;-webkit-text-stroke:0.12px #005a0c;left:-643.5px;width:800px;text-align:right;">126.6</div>
<div class="c" style="left:161px;top:369px;width:80px;height:13px"></div>
<div class="t" style="top:368.80px;font-size:8.5px;line-height:8.5px;color:#005a0c;-webkit-text-stroke:0.12px #005a0c;left:-562.5px;width:800px;text-align:right;">50.8</div>
<div class="c" style="left:241px;top:369px;width:60px;height:13px"></div>
<div class="t" style="top:368.80px;font-size:8.5px;line-height:8.5px;color:#005a0c;-webkit-text-stroke:0.12px #005a0c;left:-502.5px;width:800px;text-align:right;">189.8</div>
<div class="c" style="left:302px;top:369px;width:72px;height:13px"></div>
<div class="t" style="top:368.80px;font-size:8.5px;line-height:8.5px;color:#005a0c;-webkit-text-stroke:0.12px #005a0c;left:-429.5px;width:800px;text-align:right;">48.0</div>
<div class="c" style="left:375px;top:369px;width:69px;height:13px"></div>
<div class="t" style="top:368.80px;font-size:8.5px;line-height:8.5px;color:#005a0c;-webkit-text-stroke:0.12px #005a0c;left:-359.5px;width:800px;text-align:right;">1,074.6</div>
<div class="c" style="left:445px;top:369px;width:47px;height:13px"></div>
<div class="t" style="top:368.80px;font-size:8.5px;line-height:8.5px;color:#005a0c;-webkit-text-stroke:0.12px #005a0c;left:-311.5px;width:800px;text-align:right;">1,489.8</div>
<div class="c" style="left:52px;top:383px;width:47px;height:13px"></div>
<div class="t" style="top:382.80px;font-size:8.5px;line-height:8.5px;color:#005a0c;-webkit-text-stroke:0.12px #005a0c;left:-704.5px;width:800px;text-align:right;">1985</div>
<div class="c" style="left:99px;top:383px;width:61px;height:13px"></div>
<div class="t" style="top:382.80px;font-size:8.5px;line-height:8.5px;color:#005a0c;-webkit-text-stroke:0.12px #005a0c;left:-643.5px;width:800px;text-align:right;">133.7</div>
<div class="c" style="left:161px;top:383px;width:80px;height:13px"></div>
<div class="t" style="top:382.80px;font-size:8.5px;line-height:8.5px;color:#005a0c;-webkit-text-stroke:0.12px #005a0c;left:-562.5px;width:800px;text-align:right;">59.9</div>
<div class="c" style="left:241px;top:383px;width:60px;height:13px"></div>
<div class="t" style="top:382.80px;font-size:8.5px;line-height:8.5px;color:#005a0c;-webkit-text-stroke:0.12px #005a0c;left:-502.5px;width:800px;text-align:right;">170.3</div>
<div class="c" style="left:302px;top:383px;width:72px;height:13px"></div>
<div class="t" style="top:382.80px;font-size:8.5px;line-height:8.5px;color:#005a0c;-webkit-text-stroke:0.12px #005a0c;left:-429.5px;width:800px;text-align:right;">48.4</div>
<div class="c" style="left:375px;top:383px;width:69px;height:13px"></div>
<div class="t" style="top:382.80px;font-size:8.5px;line-height:8.5px;color:#005a0c;-webkit-text-stroke:0.12px #005a0c;left:-359.5px;width:800px;text-align:right;">1,026.2</div>
<div class="c" style="left:445px;top:383px;width:47px;height:13px"></div>
<div class="t" style="top:382.80px;font-size:8.5px;line-height:8.5px;color:#005a0c;-webkit-text-stroke:0.12px #005a0c;left:-311.5px;width:800px;text-align:right;">1,439.2</div>
<div class="c" style="left:52px;top:397px;width:47px;height:14px"></div>
<div class="t" style="top:396.80px;font-size:8.5px;line-height:8.5px;color:#005a0c;-webkit-text-stroke:0.12px #005a0c;left:-704.5px;width:800px;text-align:right;">1986</div>
<div class="c" style="left:99px;top:397px;width:61px;height:14px"></div>
<div class="t" style="top:396.80px;font-size:8.5px;line-height:8.5px;color:#005a0c;-webkit-text-stroke:0.12px #005a0c;left:-643.5px;width:800px;text-align:right;">137.2</div>
<div class="c" style="left:161px;top:397px;width:80px;height:14px"></div>
<div class="t" style="top:396.80px;font-size:8.5px;line-height:8.5px;color:#005a0c;-webkit-text-stroke:0.12px #005a0c;left:-562.5px;width:800px;text-align:right;">60.2</div>
<div class="c" style="left:241px;top:397px;width:60px;height:14px"></div>
<div class="t" style="top:396.80px;font-size:8.5px;line-height:8.5px;color:#005a0c;-webkit-text-stroke:0.12px #005a0c;left:-502.5px;width:800px;text-align:right;">240.4</div>
<div class="c" style="left:302px;top:397px;width:72px;height:14px"></div>
<div class="t" style="top:396.80px;font-size:8.5px;line-height:8.5px;color:#005a0c;-webkit-text-stroke:0.12px #005a0c;left:-429.5px;width:800px;text-align:right;">47.7</div>
<div class="c" style="left:375px;top:397px;width:69px;height:14px"></div>
<div class="t" style="top:396.80px;font-size:8.5px;line-height:8.5px;color:#005a0c;-webkit-text-stroke:0.12px #005a0c;left:-359.5px;width:800px;text-align:right;">895.2</div>
<div class="c" style="left:445px;top:397px;width:47px;height:14px"></div>
<div class="t" style="top:396.80px;font-size:8.5px;line-height:8.5px;color:#005a0c;-webkit-text-stroke:0.12px #005a0c;left:-311.5px;width:800px;text-align:right;">1,380.9</div>
<div class="c" style="left:52px;top:411px;width:47px;height:14px"></div>
<div class="t" style="top:410.80px;font-size:8.5px;line-height:8.5px;color:#005a0c;-webkit-text-stroke:0.12px #005a0c;left:-704.5px;width:800px;text-align:right;">1987</div>
<div class="c" style="left:99px;top:411px;width:61px;height:14px"></div>
<div class="t" style="top:410.80px;font-size:8.5px;line-height:8.5px;color:#005a0c;-webkit-text-stroke:0.12px #005a0c;left:-643.5px;width:800px;text-align:right;">139.3</div>
<div class="c" style="left:161px;top:411px;width:80px;height:14px"></div>
<div class="t" style="top:410.80px;font-size:8.5px;line-height:8.5px;color:#005a0c;-webkit-text-stroke:0.12px #005a0c;left:-562.5px;width:800px;text-align:right;">63.4</div>
<div class="c" style="left:241px;top:411px;width:60px;height:14px"></div>
<div class="t" style="top:410.80px;font-size:8.5px;line-height:8.5px;color:#005a0c;-webkit-text-stroke:0.12px #005a0c;left:-502.5px;width:800px;text-align:right;">158.1</div>
<div class="c" style="left:302px;top:411px;width:72px;height:14px"></div>
<div class="t" style="top:410.80px;font-size:8.5px;line-height:8.5px;color:#005a0c;-webkit-text-stroke:0.12px #005a0c;left:-429.5px;width:800px;text-align:right;">55.6</div>
<div class="c" style="left:375px;top:411px;width:69px;height:14px"></div>
<div class="t" style="top:410.80px;font-size:8.5px;line-height:8.5px;color:#005a0c;-webkit-text-stroke:0.12px #005a0c;left:-359.5px;width:800px;text-align:right;">895.0</div>
<div class="c" style="left:445px;top:411px;width:47px;height:14px"></div>
<div class="t" style="top:410.80px;font-size:8.5px;line-height:8.5px;color:#005a0c;-webkit-text-stroke:0.12px #005a0c;left:-311.5px;width:800px;text-align:right;">1,313.0</div>
<div class="c" style="left:52px;top:426px;width:47px;height:13px"></div>
<div class="t" style="top:425.80px;font-size:8.5px;line-height:8.5px;color:#005a0c;-webkit-text-stroke:0.12px #005a0c;left:-704.5px;width:800px;text-align:right;">1988</div>
<div class="c" style="left:99px;top:426px;width:61px;height:13px"></div>
<div class="t" style="top:425.80px;font-size:8.5px;line-height:8.5px;color:#005a0c;-webkit-text-stroke:0.12px #005a0c;left:-643.5px;width:800px;text-align:right;">146.1</div>
<div class="c" style="left:161px;top:426px;width:80px;height:13px"></div>
<div class="t" style="top:425.80px;font-size:8.5px;line-height:8.5px;color:#005a0c;-webkit-text-stroke:0.12px #005a0c;left:-562.5px;width:800px;text-align:right;">61.6</div>
<div class="c" style="left:241px;top:426px;width:60px;height:13px"></div>
<div class="t" style="top:425.80px;font-size:8.5px;line-height:8.5px;color:#005a0c;-webkit-text-stroke:0.12px #005a0c;left:-502.5px;width:800px;text-align:right;">158.9</div>
<div class="c" style="left:302px;top:426px;width:72px;height:13px"></div>
<div class="t" style="top:425.80px;font-size:8.5px;line-height:8.5px;color:#005a0c;-webkit-text-stroke:0.12px #005a0c;left:-429.5px;width:800px;text-align:right;">61.8</div>
<div class="c" style="left:375px;top:426px;width:69px;height:13px"></div>
<div class="t" style="top:425.80px;font-size:8.5px;line-height:8.5px;color:#005a0c;-webkit-text-stroke:0.12px #005a0c;left:-359.5px;width:800px;text-align:right;">645.4</div>
<div class="c" style="left:445px;top:426px;width:47px;height:13px"></div>
<div class="t" style="top:425.80px;font-size:8.5px;line-height:8.5px;color:#005a0c;-webkit-text-stroke:0.12px #005a0c;left:-311.5px;width:800px;text-align:right;">1,075.0</div>
<div class="c" style="left:52px;top:440px;width:47px;height:14px"></div>
<div class="t" style="top:439.80px;font-size:8.5px;line-height:8.5px;color:#005a0c;-webkit-text-stroke:0.12px #005a0c;left:-704.5px;width:800px;text-align:right;">1989</div>
<div class="c" style="left:99px;top:440px;width:61px;height:14px"></div>
<div class="t" style="top:439.80px;font-size:8.5px;line-height:8.5px;color:#005a0c;-webkit-text-stroke:0.12px #005a0c;left:-643.5px;width:800px;text-align:right;">144.4</div>
<div class="c" style="left:161px;top:440px;width:80px;height:14px"></div>
<div class="t" style="top:439.80px;font-size:8.5px;line-height:8.5px;color:#005a0c;-webkit-text-stroke:0.12px #005a0c;left:-562.5px;width:800px;text-align:right;">63.3</div>
<div class="c" style="left:241px;top:440px;width:60px;height:14px"></div>
<div class="t" style="top:439.80px;font-size:8.5px;line-height:8.5px;color:#005a0c;-webkit-text-stroke:0.12px #005a0c;left:-502.5px;width:800px;text-align:right;">135.6</div>
<div class="c" style="left:302px;top:440px;width:72px;height:14px"></div>
<div class="t" style="top:439.80px;font-size:8.5px;line-height:8.5px;color:#005a0c;-webkit-text-stroke:0.12px #005a0c;left:-429.5px;width:800px;text-align:right;">72.3</div>
<div class="c" style="left:375px;top:440px;width:69px;height:14px"></div>
<div class="t" style="top:439.80px;font-size:8.5px;line-height:8.5px;color:#005a0c;-webkit-text-stroke:0.12px #005a0c;left:-359.5px;width:800px;text-align:right;">301.2</div>
<div class="c" style="left:445px;top:440px;width:47px;height:14px"></div>
<div class="t" style="top:439.80px;font-size:8.5px;line-height:8.5px;color:#005a0c;-webkit-text-stroke:0.12px #005a0c;left:-311.5px;width:800px;text-align:right;">718.2</div>
<div class="c" style="left:52px;top:454px;width:47px;height:14px"></div>
<div class="t" style="top:453.80px;font-size:8.5px;line-height:8.5px;color:#005a0c;-webkit-text-stroke:0.12px #005a0c;left:-704.5px;width:800px;text-align:right;">1990</div>
<div class="c" style="left:99px;top:454px;width:61px;height:14px"></div>
<div class="t" style="top:453.80px;font-size:8.5px;line-height:8.5px;color:#005a0c;-webkit-text-stroke:0.12px #005a0c;left:-643.5px;width:800px;text-align:right;">141.6</div>
<div class="c" style="left:161px;top:454px;width:80px;height:14px"></div>
<div class="t" style="top:453.80px;font-size:8.5px;line-height:8.5px;color:#005a0c;-webkit-text-stroke:0.12px #005a0c;left:-562.5px;width:800px;text-align:right;">65.7</div>
<div class="c" style="left:241px;top:454px;width:60px;height:14px"></div>
<div class="t" style="top:453.80px;font-size:8.5px;line-height:8.5px;color:#005a0c;-webkit-text-stroke:0.12px #005a0c;left:-502.5px;width:800px;text-align:right;">103.9</div>
<div class="c" style="left:302px;top:454px;width:72px;height:14px"></div>
<div class="t" style="top:453.80px;font-size:8.5px;line-height:8.5px;color:#005a0c;-webkit-text-stroke:0.12px #005a0c;left:-429.5px;width:800px;text-align:right;">85.4</div>
<div class="c" style="left:375px;top:454px;width:69px;height:14px"></div>
<div class="t" style="top:453.80px;font-size:8.5px;line-height:8.5px;color:#005a0c;-webkit-text-stroke:0.12px #005a0c;left:-359.5px;width:800px;text-align:right;">329.2</div>
<div class="c" style="left:445px;top:454px;width:47px;height:14px"></div>
<div class="t" style="top:453.80px;font-size:8.5px;line-height:8.5px;color:#005a0c;-webkit-text-stroke:0.12px #005a0c;left:-311.5px;width:800px;text-align:right;">727.0</div>
<div class="c" style="left:52px;top:469px;width:47px;height:13px"></div>
<div class="t" style="top:468.80px;font-size:8.5px;line-height:8.5px;color:#005a0c;-webkit-text-stroke:0.12px #005a0c;left:-704.5px;width:800px;text-align:right;">1991</div>
<div class="c" style="left:99px;top:469px;width:61px;height:13px"></div>
<div class="t" style="top:468.80px;font-size:8.5px;line-height:8.5px;color:#005a0c;-webkit-text-stroke:0.12px #005a0c;left:-643.5px;width:800px;text-align:right;">140.5</div>
<div class="c" style="left:161px;top:469px;width:80px;height:13px"></div>
<div class="t" style="top:468.80px;font-size:8.5px;line-height:8.5px;color:#005a0c;-webkit-text-stroke:0.12px #005a0c;left:-562.5px;width:800px;text-align:right;">64.6</div>
<div class="c" style="left:241px;top:469px;width:60px;height:13px"></div>
<div class="t" style="top:468.80px;font-size:8.5px;line-height:8.5px;color:#005a0c;-webkit-text-stroke:0.12px #005a0c;left:-502.5px;width:800px;text-align:right;">93.1</div>
<div class="c" style="left:302px;top:469px;width:72px;height:13px"></div>
<div class="t" style="top:468.80px;font-size:8.5px;line-height:8.5px;color:#005a0c;-webkit-text-stroke:0.12px #005a0c;left:-429.5px;width:800px;text-align:right;">92.7</div>
<div class="c" style="left:375px;top:469px;width:69px;height:13px"></div>
<div class="t" style="top:468.80px;font-size:8.5px;line-height:8.5px;color:#005a0c;-webkit-text-stroke:0.12px #005a0c;left:-359.5px;width:800px;text-align:right;">298.7</div>
<div class="c" style="left:445px;top:469px;width:47px;height:13px"></div>
<div class="t" style="top:468.80px;font-size:8.5px;line-height:8.5px;color:#005a0c;-webkit-text-stroke:0.12px #005a0c;left:-311.5px;width:800px;text-align:right;">691.4</div>
<div class="c" style="left:52px;top:483px;width:47px;height:13px"></div>
<div class="t" style="top:482.80px;font-size:8.5px;line-height:8.5px;color:#005a0c;-webkit-text-stroke:0.12px #005a0c;left:-704.5px;width:800px;text-align:right;">1992</div>
<div class="c" style="left:99px;top:483px;width:61px;height:13px"></div>
<div class="t" style="top:482.80px;font-size:8.5px;line-height:8.5px;color:#005a0c;-webkit-text-stroke:0.12px #005a0c;left:-643.5px;width:800px;text-align:right;">151.5</div>
<div class="c" style="left:161px;top:483px;width:80px;height:13px"></div>
<div class="t" style="top:482.80px;font-size:8.5px;line-height:8.5px;color:#005a0c;-webkit-text-stroke:0.12px #005a0c;left:-562.5px;width:800px;text-align:right;">61.8</div>
<div class="c" style="left:241px;top:483px;width:60px;height:13px"></div>
<div class="t" style="top:482.80px;font-size:8.5px;line-height:8.5px;color:#005a0c;-webkit-text-stroke:0.12px #005a0c;left:-502.5px;width:800px;text-align:right;">115.1</div>
<div class="c" style="left:302px;top:483px;width:72px;height:13px"></div>
<div class="t" style="top:482.80px;font-size:8.5px;line-height:8.5px;color:#005a0c;-webkit-text-stroke:0.12px #005a0c;left:-429.5px;width:800px;text-align:right;">105.2</div>
<div class="c" style="left:375px;top:483px;width:69px;height:13px"></div>
<div class="t" style="top:482.80px;font-size:8.5px;line-height:8.5px;color:#005a0c;-webkit-text-stroke:0.12px #005a0c;left:-359.5px;width:800px;text-align:right;">271.3</div>
<div class="c" style="left:445px;top:483px;width:47px;height:13px"></div>
<div class="t" style="top:482.80px;font-size:8.5px;line-height:8.5px;color:#005a0c;-webkit-text-stroke:0.12px #005a0c;left:-311.5px;width:800px;text-align:right;">707.3</div>
<div class="c" style="left:52px;top:497px;width:47px;height:14px"></div>
<div class="t" style="top:496.80px;font-size:8.5px;line-height:8.5px;color:#005a0c;-webkit-text-stroke:0.12px #005a0c;left:-704.5px;width:800px;text-align:right;">1993</div>
<div class="c" style="left:99px;top:497px;width:61px;height:14px"></div>
<div class="t" style="top:496.80px;font-size:8.5px;line-height:8.5px;color:#005a0c;-webkit-text-stroke:0.12px #005a0c;left:-643.5px;width:800px;text-align:right;">152.9</div>
<div class="c" style="left:161px;top:497px;width:80px;height:14px"></div>
<div class="t" style="top:496.80px;font-size:8.5px;line-height:8.5px;color:#005a0c;-webkit-text-stroke:0.12px #005a0c;left:-562.5px;width:800px;text-align:right;">62.8</div>
<div class="c" style="left:241px;top:497px;width:60px;height:14px"></div>
<div class="t" style="top:496.80px;font-size:8.5px;line-height:8.5px;color:#005a0c;-webkit-text-stroke:0.12px #005a0c;left:-502.5px;width:800px;text-align:right;">91.1</div>
<div class="c" style="left:302px;top:497px;width:72px;height:14px"></div>
<div class="t" style="top:496.80px;font-size:8.5px;line-height:8.5px;color:#005a0c;-webkit-text-stroke:0.12px #005a0c;left:-429.5px;width:800px;text-align:right;">112.6</div>
<div class="c" style="left:375px;top:497px;width:69px;height:14px"></div>
<div class="t" style="top:496.80px;font-size:8.5px;line-height:8.5px;color:#005a0c;-webkit-text-stroke:0.12px #005a0c;left:-359.5px;width:800px;text-align:right;">270.8</div>
<div class="c" style="left:445px;top:497px;width:47px;height:14px"></div>
<div class="t" style="top:496.80px;font-size:8.5px;line-height:8.5px;color:#005a0c;-webkit-text-stroke:0.12px #005a0c;left:-311.5px;width:800px;text-align:right;">693.8</div>
<div class="c" style="left:52px;top:511px;width:47px;height:14px"></div>
<div class="t" style="top:510.80px;font-size:8.5px;line-height:8.5px;color:#005a0c;-webkit-text-stroke:0.12px #005a0c;left:-704.5px;width:800px;text-align:right;">1994</div>
<div class="c" style="left:99px;top:511px;width:61px;height:14px"></div>
<div class="t" style="top:510.80px;font-size:8.5px;line-height:8.5px;color:#005a0c;-webkit-text-stroke:0.12px #005a0c;left:-643.5px;width:800px;text-align:right;">151.5</div>
<div class="c" style="left:161px;top:511px;width:80px;height:14px"></div>
<div class="t" style="top:510.80px;font-size:8.5px;line-height:8.5px;color:#005a0c;-webkit-text-stroke:0.12px #005a0c;left:-562.5px;width:800px;text-align:right;">65.3</div>
<div class="c" style="left:241px;top:511px;width:60px;height:14px"></div>
<div class="t" style="top:510.80px;font-size:8.5px;line-height:8.5px;color:#005a0c;-webkit-text-stroke:0.12px #005a0c;left:-502.5px;width:800px;text-align:right;">105.5</div>
<div class="c" style="left:302px;top:511px;width:72px;height:14px"></div>
<div class="t" style="top:510.80px;font-size:8.5px;line-height:8.5px;color:#005a0c;-webkit-text-stroke:0.12px #005a0c;left:-429.5px;width:800px;text-align:right;">107.3</div>
<div class="c" style="left:375px;top:511px;width:69px;height:14px"></div>
<div class="t" style="top:510.80px;font-size:8.5px;line-height:8.5px;color:#005a0c;-webkit-text-stroke:0.12px #005a0c;left:-359.5px;width:800px;text-align:right;">264.1</div>
<div class="c" style="left:445px;top:511px;width:47px;height:14px"></div>
<div class="t" style="top:510.80px;font-size:8.5px;line-height:8.5px;color:#005a0c;-webkit-text-stroke:0.12px #005a0c;left:-311.5px;width:800px;text-align:right;">696.8</div>
<div class="c" style="left:52px;top:526px;width:47px;height:13px"></div>
<div class="t" style="top:525.80px;font-size:8.5px;line-height:8.5px;color:#005a0c;-webkit-text-stroke:0.12px #005a0c;left:-704.5px;width:800px;text-align:right;">1995</div>
<div class="c" style="left:99px;top:526px;width:61px;height:13px"></div>
<div class="t" style="top:525.80px;font-size:8.5px;line-height:8.5px;color:#005a0c;-webkit-text-stroke:0.12px #005a0c;left:-643.5px;width:800px;text-align:right;">147.5</div>
<div class="c" style="left:161px;top:526px;width:80px;height:13px"></div>
<div class="t" style="top:525.80px;font-size:8.5px;line-height:8.5px;color:#005a0c;-webkit-text-stroke:0.12px #005a0c;left:-562.5px;width:800px;text-align:right;">66.0</div>
<div class="c" style="left:241px;top:526px;width:60px;height:13px"></div>
<div class="t" style="top:525.80px;font-size:8.5px;line-height:8.5px;color:#005a0c;-webkit-text-stroke:0.12px #005a0c;left:-502.5px;width:800px;text-align:right;">64.0</div>
<div class="c" style="left:302px;top:526px;width:72px;height:13px"></div>
<div class="t" style="top:525.80px;font-size:8.5px;line-height:8.5px;color:#005a0c;-webkit-text-stroke:0.12px #005a0c;left:-429.5px;width:800px;text-align:right;">99.1</div>
<div class="c" style="left:375px;top:526px;width:69px;height:13px"></div>
<div class="t" style="top:525.80px;font-size:8.5px;line-height:8.5px;color:#005a0c;-webkit-text-stroke:0.12px #005a0c;left:-359.5px;width:800px;text-align:right;">134.8</div>
<div class="c" style="left:445px;top:526px;width:47px;height:13px"></div>
<div class="t" style="top:525.80px;font-size:8.5px;line-height:8.5px;color:#005a0c;-webkit-text-stroke:0.12px #005a0c;left:-311.5px;width:800px;text-align:right;">513.7</div>
<div class="c" style="left:52px;top:540px;width:47px;height:14px"></div>
<div class="t" style="top:539.80px;font-size:8.5px;line-height:8.5px;color:#005a0c;-webkit-text-stroke:0.12px #005a0c;left:-704.5px;width:800px;text-align:right;">1996</div>
<div class="c" style="left:99px;top:540px;width:61px;height:14px"></div>
<div class="t" style="top:539.80px;font-size:8.5px;line-height:8.5px;color:#005a0c;-webkit-text-stroke:0.12px #005a0c;left:-643.5px;width:800px;text-align:right;">144.8</div>
<div class="c" style="left:161px;top:540px;width:80px;height:14px"></div>
<div class="t" style="top:539.80px;font-size:8.5px;line-height:8.5px;color:#005a0c;-webkit-text-stroke:0.12px #005a0c;left:-562.5px;width:800px;text-align:right;">72.9</div>
<div class="c" style="left:241px;top:540px;width:60px;height:14px"></div>
<div class="t" style="top:539.80px;font-size:8.5px;line-height:8.5px;color:#005a0c;-webkit-text-stroke:0.12px #005a0c;left:-502.5px;width:800px;text-align:right;">11.0</div>
<div class="c" style="left:302px;top:540px;width:72px;height:14px"></div>
<div class="t" style="top:539.80px;font-size:8.5px;line-height:8.5px;color:#005a0c;-webkit-text-stroke:0.12px #005a0c;left:-429.5px;width:800px;text-align:right;">101.5</div>
<div class="c" style="left:375px;top:540px;width:69px;height:14px"></div>
<div class="t" style="top:539.80px;font-size:8.5px;line-height:8.5px;color:#005a0c;-webkit-text-stroke:0.12px #005a0c;left:-359.5px;width:800px;text-align:right;">79.6</div>
<div class="c" style="left:445px;top:540px;width:47px;height:14px"></div>
<div class="t" style="top:539.80px;font-size:8.5px;line-height:8.5px;color:#005a0c;-webkit-text-stroke:0.12px #005a0c;left:-311.5px;width:800px;text-align:right;">410.5</div>
<div class="c" style="left:52px;top:554px;width:47px;height:14px"></div>
<div class="t" style="top:553.80px;font-size:8.5px;line-height:8.5px;color:#005a0c;-webkit-text-stroke:0.12px #005a0c;left:-704.5px;width:800px;text-align:right;">1997</div>
<div class="c" style="left:99px;top:554px;width:61px;height:14px"></div>
<div class="t" style="top:553.80px;font-size:8.5px;line-height:8.5px;color:#005a0c;-webkit-text-stroke:0.12px #005a0c;left:-643.5px;width:800px;text-align:right;">145.1</div>
<div class="c" style="left:161px;top:554px;width:80px;height:14px"></div>
<div class="t" style="top:553.80px;font-size:8.5px;line-height:8.5px;color:#005a0c;-webkit-text-stroke:0.12px #005a0c;left:-562.5px;width:800px;text-align:right;">73.5</div>
<div class="c" style="left:241px;top:554px;width:60px;height:14px"></div>
<div class="t" style="top:553.80px;font-size:8.5px;line-height:8.5px;color:#005a0c;-webkit-text-stroke:0.12px #005a0c;left:-502.5px;width:800px;text-align:right;">6.3</div>
<div class="c" style="left:302px;top:554px;width:72px;height:14px"></div>
<div class="t" style="top:553.80px;font-size:8.5px;line-height:8.5px;color:#005a0c;-webkit-text-stroke:0.12px #005a0c;left:-429.5px;width:800px;text-align:right;">100.4</div>
<div class="c" style="left:375px;top:554px;width:69px;height:14px"></div>
<div class="t" style="top:553.80px;font-size:8.5px;line-height:8.5px;color:#005a0c;-webkit-text-stroke:0.12px #005a0c;left:-359.5px;width:800px;text-align:right;">191.8</div>
<div class="c" style="left:445px;top:554px;width:47px;height:14px"></div>
<div class="t" style="top:553.80px;font-size:8.5px;line-height:8.5px;color:#005a0c;-webkit-text-stroke:0.12px #005a0c;left:-311.5px;width:800px;text-align:right;">518.2</div>
<div class="c" style="left:52px;top:569px;width:47px;height:13px"></div>
<div class="t" style="top:568.80px;font-size:8.5px;line-height:8.5px;color:#005a0c;-webkit-text-stroke:0.12px #005a0c;left:-704.5px;width:800px;text-align:right;">1998</div>
<div class="c" style="left:99px;top:569px;width:61px;height:13px"></div>
<div class="t" style="top:568.80px;font-size:8.5px;line-height:8.5px;color:#005a0c;-webkit-text-stroke:0.12px #005a0c;left:-643.5px;width:800px;text-align:right;">141.1</div>
<div class="c" style="left:161px;top:569px;width:80px;height:13px"></div>
<div class="t" style="top:568.80px;font-size:8.5px;line-height:8.5px;color:#005a0c;-webkit-text-stroke:0.12px #005a0c;left:-562.5px;width:800px;text-align:right;">75.2</div>
<div class="c" style="left:241px;top:569px;width:60px;height:13px"></div>
<div class="t" style="top:568.80px;font-size:8.5px;line-height:8.5px;color:#005a0c;-webkit-text-stroke:0.12px #005a0c;left:-502.5px;width:800px;text-align:right;">9.3</div>
<div class="c" style="left:302px;top:569px;width:72px;height:13px"></div>
<div class="t" style="top:568.80px;font-size:8.5px;line-height:8.5px;color:#005a0c;-webkit-text-stroke:0.12px #005a0c;left:-429.5px;width:800px;text-align:right;">96.3</div>
<div class="c" style="left:375px;top:569px;width:69px;height:13px"></div>
<div class="t" style="top:568.80px;font-size:8.5px;line-height:8.5px;color:#005a0c;-webkit-text-stroke:0.12px #005a0c;left:-359.5px;width:800px;text-align:right;">234.3</div>
<div class="c" style="left:445px;top:569px;width:47px;height:13px"></div>
<div class="t" style="top:568.80px;font-size:8.5px;line-height:8.5px;color:#005a0c;-webkit-text-stroke:0.12px #005a0c;left:-311.5px;width:800px;text-align:right;">557.2</div>
<div class="c" style="left:52px;top:583px;width:47px;height:13px"></div>
<div class="t" style="top:582.80px;font-size:8.5px;line-height:8.5px;color:#005a0c;-webkit-text-stroke:0.12px #005a0c;left:-704.5px;width:800px;text-align:right;">1999</div>
<div class="c" style="left:99px;top:583px;width:61px;height:13px"></div>
<div class="t" style="top:582.80px;font-size:8.5px;line-height:8.5px;color:#005a0c;-webkit-text-stroke:0.12px #005a0c;left:-643.5px;width:800px;text-align:right;">140.3</div>
<div class="c" style="left:161px;top:583px;width:80px;height:13px"></div>
<div class="t" style="top:582.80px;font-size:8.5px;line-height:8.5px;color:#005a0c;-webkit-text-stroke:0.12px #005a0c;left:-562.5px;width:800px;text-align:right;">79.7</div>
<div class="c" style="left:241px;top:583px;width:60px;height:13px"></div>
<div class="t" style="top:582.80px;font-size:8.5px;line-height:8.5px;color:#005a0c;-webkit-text-stroke:0.12px #005a0c;left:-502.5px;width:800px;text-align:right;">3.0</div>
<div class="c" style="left:302px;top:583px;width:72px;height:13px"></div>
<div class="t" style="top:582.80px;font-size:8.5px;line-height:8.5px;color:#005a0c;-webkit-text-stroke:0.12px #005a0c;left:-429.5px;width:800px;text-align:right;">100.3</div>
<div class="c" style="left:375px;top:583px;width:69px;height:13px"></div>
<div class="t" style="top:582.80px;font-size:8.5px;line-height:8.5px;color:#005a0c;-webkit-text-stroke:0.12px #005a0c;left:-359.5px;width:800px;text-align:right;">269.6</div>
<div class="c" style="left:445px;top:583px;width:47px;height:13px"></div>
<div class="t" style="top:582.80px;font-size:8.5px;line-height:8.5px;color:#005a0c;-webkit-text-stroke:0.12px #005a0c;left:-311.5px;width:800px;text-align:right;">601.4</div>
<div class="c" style="left:52px;top:597px;width:47px;height:14px"></div>
<div class="t" style="top:596.80px;font-size:8.5px;line-height:8.5px;color:#005a0c;-webkit-text-stroke:0.12px #005a0c;left:-704.5px;width:800px;text-align:right;">2000</div>
<div class="c" style="left:99px;top:597px;width:61px;height:14px"></div>
<div class="t" style="top:596.80px;font-size:8.5px;line-height:8.5px;color:#005a0c;-webkit-text-stroke:0.12px #005a0c;left:-643.5px;width:800px;text-align:right;">137.1</div>
<div class="c" style="left:161px;top:597px;width:80px;height:14px"></div>
<div class="t" style="top:596.80px;font-size:8.5px;line-height:8.5px;color:#005a0c;-webkit-text-stroke:0.12px #005a0c;left:-562.5px;width:800px;text-align:right;">74.2</div>
<div class="c" style="left:241px;top:597px;width:60px;height:14px"></div>
<div class="t" style="top:596.80px;font-size:8.5px;line-height:8.5px;color:#005a0c;-webkit-text-stroke:0.12px #005a0c;left:-502.5px;width:800px;text-align:right;">2.2</div>
<div class="c" style="left:302px;top:597px;width:72px;height:14px"></div>
<div class="t" style="top:596.80px;font-size:8.5px;line-height:8.5px;color:#005a0c;-webkit-text-stroke:0.12px #005a0c;left:-429.5px;width:800px;text-align:right;">97.8</div>
<div class="c" style="left:375px;top:597px;width:69px;height:14px"></div>
<div class="t" style="top:596.80px;font-size:8.5px;line-height:8.5px;color:#005a0c;-webkit-text-stroke:0.12px #005a0c;left:-359.5px;width:800px;text-align:right;">224.8</div>
<div class="c" style="left:445px;top:597px;width:47px;height:14px"></div>
<div class="t" style="top:596.80px;font-size:8.5px;line-height:8.5px;color:#005a0c;-webkit-text-stroke:0.12px #005a0c;left:-311.5px;width:800px;text-align:right;">536.6</div>
<div class="c" style="left:52px;top:611px;width:47px;height:14px"></div>
<div class="t" style="top:610.80px;font-size:8.5px;line-height:8.5px;color:#005a0c;-webkit-text-stroke:0.12px #005a0c;left:-704.5px;width:800px;text-align:right;">2001</div>
<div class="c" style="left:99px;top:611px;width:61px;height:14px"></div>
<div class="t" style="top:610.80px;font-size:8.5px;line-height:8.5px;color:#005a0c;-webkit-text-stroke:0.12px #005a0c;left:-643.5px;width:800px;text-align:right;">152.1</div>
<div class="c" style="left:161px;top:611px;width:80px;height:14px"></div>
<div class="t" style="top:610.80px;font-size:8.5px;line-height:8.5px;color:#005a0c;-webkit-text-stroke:0.12px #005a0c;left:-562.5px;width:800px;text-align:right;">72.3</div>
<div class="c" style="left:241px;top:611px;width:60px;height:14px"></div>
<div class="t" style="top:610.80px;font-size:8.5px;line-height:8.5px;color:#005a0c;-webkit-text-stroke:0.12px #005a0c;left:-502.5px;width:800px;text-align:right;">6.8</div>
<div class="c" style="left:302px;top:611px;width:72px;height:14px"></div>
<div class="t" style="top:610.80px;font-size:8.5px;line-height:8.5px;color:#005a0c;-webkit-text-stroke:0.12px #005a0c;left:-429.5px;width:800px;text-align:right;">105.4</div>
<div class="c" style="left:375px;top:611px;width:69px;height:14px"></div>
<div class="t" style="top:610.80px;font-size:8.5px;line-height:8.5px;color:#005a0c;-webkit-text-stroke:0.12px #005a0c;left:-359.5px;width:800px;text-align:right;">377.1</div>
<div class="c" style="left:445px;top:611px;width:47px;height:14px"></div>
<div class="t" style="top:610.80px;font-size:8.5px;line-height:8.5px;color:#005a0c;-webkit-text-stroke:0.12px #005a0c;left:-311.5px;width:800px;text-align:right;">716.3</div>
<div class="c" style="left:52px;top:626px;width:47px;height:13px"></div>
<div class="t" style="top:625.80px;font-size:8.5px;line-height:8.5px;color:#005a0c;-webkit-text-stroke:0.12px #005a0c;left:-704.5px;width:800px;text-align:right;">2002</div>
<div class="c" style="left:99px;top:626px;width:61px;height:13px"></div>
<div class="t" style="top:625.80px;font-size:8.5px;line-height:8.5px;color:#005a0c;-webkit-text-stroke:0.12px #005a0c;left:-643.5px;width:800px;text-align:right;">150.0</div>
<div class="c" style="left:161px;top:626px;width:80px;height:13px"></div>
<div class="t" style="top:625.80px;font-size:8.5px;line-height:8.5px;color:#005a0c;-webkit-text-stroke:0.12px #005a0c;left:-562.5px;width:800px;text-align:right;">75.5</div>
<div class="c" style="left:241px;top:626px;width:60px;height:13px"></div>
<div class="t" style="top:625.80px;font-size:8.5px;line-height:8.5px;color:#005a0c;-webkit-text-stroke:0.12px #005a0c;left:-502.5px;width:800px;text-align:right;">16.4</div>
<div class="c" style="left:302px;top:626px;width:72px;height:13px"></div>
<div class="t" style="top:625.80px;font-size:8.5px;line-height:8.5px;color:#005a0c;-webkit-text-stroke:0.12px #005a0c;left:-429.5px;width:800px;text-align:right;">115.4</div>
<div class="c" style="left:375px;top:626px;width:69px;height:13px"></div>
<div class="t" style="top:625.80px;font-size:8.5px;line-height:8.5px;color:#005a0c;-webkit-text-stroke:0.12px #005a0c;left:-359.5px;width:800px;text-align:right;">434.5</div>
<div class="c" style="left:445px;top:626px;width:47px;height:13px"></div>
<div class="t" style="top:625.80px;font-size:8.5px;line-height:8.5px;color:#005a0c;-webkit-text-stroke:0.12px #005a0c;left:-311.5px;width:800px;text-align:right;">802.6</div>
<div class="c" style="left:52px;top:640px;width:47px;height:14px"></div>
<div class="t" style="top:639.80px;font-size:8.5px;line-height:8.5px;color:#005a0c;-webkit-text-stroke:0.12px #005a0c;left:-704.5px;width:800px;text-align:right;">2003</div>
<div class="c" style="left:99px;top:640px;width:61px;height:14px"></div>
<div class="t" style="top:639.80px;font-size:8.5px;line-height:8.5px;color:#005a0c;-webkit-text-stroke:0.12px #005a0c;left:-643.5px;width:800px;text-align:right;">3.2</div>
<div class="c" style="left:161px;top:640px;width:80px;height:14px"></div>
<div class="t" style="top:639.80px;font-size:8.5px;line-height:8.5px;color:#005a0c;-webkit-text-stroke:0.12px #005a0c;left:-562.5px;width:800px;text-align:right;">75.3</div>
<div class="c" style="left:241px;top:640px;width:60px;height:14px"></div>
<div class="t" style="top:639.80px;font-size:8.5px;line-height:8.5px;color:#005a0c;-webkit-text-stroke:0.12px #005a0c;left:-502.5px;width:800px;text-align:right;">6.2</div>
<div class="c" style="left:302px;top:640px;width:72px;height:14px"></div>
<div class="t" style="top:639.80px;font-size:8.5px;line-height:8.5px;color:#005a0c;-webkit-text-stroke:0.12px #005a0c;left:-429.5px;width:800px;text-align:right;">121.8</div>
<div class="c" style="left:375px;top:640px;width:69px;height:14px"></div>
<div class="t" style="top:639.80px;font-size:8.5px;line-height:8.5px;color:#005a0c;-webkit-text-stroke:0.12px #005a0c;left:-359.5px;width:800px;text-align:right;">455.6</div>
<div class="c" style="left:445px;top:640px;width:47px;height:14px"></div>
<div class="t" style="top:639.80px;font-size:8.5px;line-height:8.5px;color:#005a0c;-webkit-text-stroke:0.12px #005a0c;left:-311.5px;width:800px;text-align:right;">662.8</div>
<div class="c" style="left:52px;top:654px;width:47px;height:14px"></div>
<div class="t" style="top:653.80px;font-size:8.5px;line-height:8.5px;color:#005a0c;-webkit-text-stroke:0.12px #005a0c;left:-704.5px;width:800px;text-align:right;">2004</div>
<div class="c" style="left:99px;top:654px;width:61px;height:14px"></div>
<div class="t" style="top:653.80px;font-size:8.5px;line-height:8.5px;color:#005a0c;-webkit-text-stroke:0.12px #005a0c;left:-643.5px;width:800px;text-align:right;">3.7</div>
<div class="c" style="left:161px;top:654px;width:80px;height:14px"></div>
<div class="t" style="top:653.80px;font-size:8.5px;line-height:8.5px;color:#005a0c;-webkit-text-stroke:0.12px #005a0c;left:-562.5px;width:800px;text-align:right;">78.0</div>
<div class="c" style="left:241px;top:654px;width:60px;height:14px"></div>
<div class="t" style="top:653.80px;font-size:8.5px;line-height:8.5px;color:#005a0c;-webkit-text-stroke:0.12px #005a0c;left:-502.5px;width:800px;text-align:right;">10.0</div>
<div class="c" style="left:302px;top:654px;width:72px;height:14px"></div>
<div class="t" style="top:653.80px;font-size:8.5px;line-height:8.5px;color:#005a0c;-webkit-text-stroke:0.12px #005a0c;left:-429.5px;width:800px;text-align:right;">145.3</div>
<div class="c" style="left:375px;top:654px;width:69px;height:14px"></div>
<div class="t" style="top:653.80px;font-size:8.5px;line-height:8.5px;color:#005a0c;-webkit-text-stroke:0.12px #005a0c;left:-359.5px;width:800px;text-align:right;">419.7</div>
<div class="c" style="left:445px;top:654px;width:47px;height:14px"></div>
<div class="t" style="top:653.80px;font-size:8.5px;line-height:8.5px;color:#005a0c;-webkit-text-stroke:0.12px #005a0c;left:-311.5px;width:800px;text-align:right;">676.8</div>
<div class="c" style="left:52px;top:669px;width:47px;height:13px"></div>
<div class="t" style="top:668.80px;font-size:8.5px;line-height:8.5px;color:#005a0c;-webkit-text-stroke:0.12px #005a0c;left:-704.5px;width:800px;text-align:right;">2005</div>
<div class="c" style="left:99px;top:669px;width:61px;height:13px"></div>
<div class="t" style="top:668.80px;font-size:8.5px;line-height:8.5px;color:#005a0c;-webkit-text-stroke:0.12px #005a0c;left:-643.5px;width:800px;text-align:right;">3.8</div>
<div class="c" style="left:161px;top:669px;width:80px;height:13px"></div>
<div class="t" style="top:668.80px;font-size:8.5px;line-height:8.5px;color:#005a0c;-webkit-text-stroke:0.12px #005a0c;left:-562.5px;width:800px;text-align:right;">75.8</div>
<div class="c" style="left:241px;top:669px;width:60px;height:13px"></div>
<div class="t" style="top:668.80px;font-size:8.5px;line-height:8.5px;color:#005a0c;-webkit-text-stroke:0.12px #005a0c;left:-502.5px;width:800px;text-align:right;">3.8</div>
<div class="c" style="left:302px;top:669px;width:72px;height:13px"></div>
<div class="t" style="top:668.80px;font-size:8.5px;line-height:8.5px;color:#005a0c;-webkit-text-stroke:0.12px #005a0c;left:-429.5px;width:800px;text-align:right;">155.6</div>
<div class="c" style="left:375px;top:669px;width:69px;height:13px"></div>
<div class="t" style="top:668.80px;font-size:8.5px;line-height:8.5px;color:#005a0c;-webkit-text-stroke:0.12px #005a0c;left:-359.5px;width:800px;text-align:right;">372.4</div>
<div class="c" style="left:445px;top:669px;width:47px;height:13px"></div>
<div class="t" style="top:668.80px;font-size:8.5px;line-height:8.5px;color:#005a0c;-webkit-text-stroke:0.12px #005a0c;left:-311.5px;width:800px;text-align:right;">626.5</div>
<div class="r" style="left:56px;top:56px;width:17px;height:15px;box-sizing:border-box;border:1px solid #e2e2e2;border-radius:3px;background:rgba(255,255,255,0.35);"></div>
<svg class="r" style="left:59px;top:61px" width="10" height="6" viewBox="0 0 10 6"><path d="M0 0 H10 L5 5.5 Z" fill="#eba4a4"/></svg>
<div class="r" style="left:47px;top:822px;width:449px;height:80px;box-sizing:border-box;border:3px solid #777;background:#f6f2e6;"></div>
<div class="r" style="left:51px;top:825px;width:442px;height:74px;box-sizing:border-box;border:1px solid #2b66ff;border-right-width:2px;"></div>
<div class="c" style="left:52px;top:826px;width:47px;height:14px"></div>
<div class="t" style="top:825.80px;font-size:8.5px;line-height:8.5px;color:#005a0c;-webkit-text-stroke:0.12px #005a0c;left:-704.5px;width:800px;text-align:right;">2006</div>
<div class="c" style="left:99px;top:826px;width:61px;height:14px"></div>
<div class="t" style="top:825.80px;font-size:8.5px;line-height:8.5px;color:#005a0c;-webkit-text-stroke:0.12px #005a0c;left:-643.5px;width:800px;text-align:right;">2.9</div>
<div class="c" style="left:161px;top:826px;width:80px;height:14px"></div>
<div class="t" style="top:825.80px;font-size:8.5px;line-height:8.5px;color:#005a0c;-webkit-text-stroke:0.12px #005a0c;left:-562.5px;width:800px;text-align:right;">75.6</div>
<div class="c" style="left:241px;top:826px;width:60px;height:14px"></div>
<div class="t" style="top:825.80px;font-size:8.5px;line-height:8.5px;color:#005a0c;-webkit-text-stroke:0.12px #005a0c;left:-502.5px;width:800px;text-align:right;">2.8</div>
<div class="c" style="left:302px;top:826px;width:72px;height:14px"></div>
<div class="t" style="top:825.80px;font-size:8.5px;line-height:8.5px;color:#005a0c;-webkit-text-stroke:0.12px #005a0c;left:-429.5px;width:800px;text-align:right;">131.0</div>
<div class="c" style="left:375px;top:826px;width:69px;height:14px"></div>
<div class="t" style="top:825.80px;font-size:8.5px;line-height:8.5px;color:#005a0c;-webkit-text-stroke:0.12px #005a0c;left:-359.5px;width:800px;text-align:right;">300.4</div>
<div class="c" style="left:445px;top:826px;width:47px;height:14px"></div>
<div class="t" style="top:825.80px;font-size:8.5px;line-height:8.5px;color:#005a0c;-webkit-text-stroke:0.12px #005a0c;left:-311.5px;width:800px;text-align:right;">529.0</div>
<div class="c" style="left:52px;top:841px;width:47px;height:14px"></div>
<div class="t" style="top:840.80px;font-size:8.5px;line-height:8.5px;color:#005a0c;-webkit-text-stroke:0.12px #005a0c;left:-704.5px;width:800px;text-align:right;">2007</div>
<div class="c" style="left:99px;top:841px;width:61px;height:14px"></div>
<div class="t" style="top:840.80px;font-size:8.5px;line-height:8.5px;color:#005a0c;-webkit-text-stroke:0.12px #005a0c;left:-643.5px;width:800px;text-align:right;">2.6</div>
<div class="c" style="left:161px;top:841px;width:80px;height:14px"></div>
<div class="t" style="top:840.80px;font-size:8.5px;line-height:8.5px;color:#005a0c;-webkit-text-stroke:0.12px #005a0c;left:-562.5px;width:800px;text-align:right;">80.8</div>
<div class="c" style="left:241px;top:841px;width:60px;height:14px"></div>
<div class="t" style="top:840.80px;font-size:8.5px;line-height:8.5px;color:#005a0c;-webkit-text-stroke:0.12px #005a0c;left:-502.5px;width:800px;text-align:right;">0.0</div>
<div class="c" style="left:302px;top:841px;width:72px;height:14px"></div>
<div class="t" style="top:840.80px;font-size:8.5px;line-height:8.5px;color:#005a0c;-webkit-text-stroke:0.12px #005a0c;left:-429.5px;width:800px;text-align:right;">142.1</div>
<div class="c" style="left:375px;top:841px;width:69px;height:14px"></div>
<div class="t" style="top:840.80px;font-size:8.5px;line-height:8.5px;color:#005a0c;-webkit-text-stroke:0.12px #005a0c;left:-359.5px;width:800px;text-align:right;">255.4</div>
<div class="c" style="left:445px;top:841px;width:47px;height:14px"></div>
<div class="t" style="top:840.80px;font-size:8.5px;line-height:8.5px;color:#005a0c;-webkit-text-stroke:0.12px #005a0c;left:-311.5px;width:800px;text-align:right;">488.0</div>
<div class="c" style="left:52px;top:855px;width:47px;height:14px"></div>
<div class="t" style="top:854.80px;font-size:8.5px;line-height:8.5px;color:#005a0c;-webkit-text-stroke:0.12px #005a0c;left:-704.5px;width:800px;text-align:right;">2008</div>
<div class="c" style="left:99px;top:855px;width:61px;height:14px"></div>
<div class="t" style="top:854.80px;font-size:8.5px;line-height:8.5px;color:#005a0c;-webkit-text-stroke:0.12px #005a0c;left:-643.5px;width:800px;text-align:right;">2.4</div>
<div class="c" style="left:161px;top:855px;width:80px;height:14px"></div>
<div class="t" style="top:854.80px;font-size:8.5px;line-height:8.5px;color:#005a0c;-webkit-text-stroke:0.12px #005a0c;left:-562.5px;width:800px;text-align:right;">96.5</div>
<div class="c" style="left:241px;top:855px;width:60px;height:14px"></div>
<div class="t" style="top:854.80px;font-size:8.5px;line-height:8.5px;color:#005a0c;-webkit-text-stroke:0.12px #005a0c;left:-502.5px;width:800px;text-align:right;">0.0</div>
<div class="c" style="left:302px;top:855px;width:72px;height:14px"></div>
<div class="t" style="top:854.80px;font-size:8.5px;line-height:8.5px;color:#005a0c;-webkit-text-stroke:0.12px #005a0c;left:-429.5px;width:800px;text-align:right;">160.9</div>
<div class="c" style="left:375px;top:855px;width:69px;height:14px"></div>
<div class="t" style="top:854.80px;font-size:8.5px;line-height:8.5px;color:#005a0c;-webkit-text-stroke:0.12px #005a0c;left:-359.5px;width:800px;text-align:right;">283.0</div>
<div class="c" style="left:445px;top:855px;width:47px;height:14px"></div>
<div class="t" style="top:854.80px;font-size:8.5px;line-height:8.5px;color:#005a0c;-webkit-text-stroke:0.12px #005a0c;left:-311.5px;width:800px;text-align:right;">543.0</div>
<div class="c" style="left:52px;top:869px;width:47px;height:14px"></div>
<div class="c" style="left:99px;top:869px;width:61px;height:14px"></div>
<div class="c" style="left:161px;top:869px;width:80px;height:14px"></div>
<div class="c" style="left:241px;top:869px;width:60px;height:14px"></div>
<div class="c" style="left:302px;top:869px;width:72px;height:14px"></div>
<div class="c" style="left:375px;top:869px;width:69px;height:14px"></div>
<div class="c" style="left:445px;top:869px;width:47px;height:14px"></div>
<div class="c" style="left:52px;top:883px;width:47px;height:14px"></div>
<div class="c" style="left:99px;top:883px;width:61px;height:14px"></div>
<div class="c" style="left:161px;top:883px;width:80px;height:14px"></div>
<div class="c" style="left:241px;top:883px;width:60px;height:14px"></div>
<div class="c" style="left:302px;top:883px;width:72px;height:14px"></div>
<div class="c" style="left:375px;top:883px;width:69px;height:14px"></div>
<div class="c" style="left:445px;top:883px;width:47px;height:14px"></div>
<div class="r" style="left:56px;top:830px;width:17px;height:15px;box-sizing:border-box;border:1px solid #e2e2e2;border-radius:3px;background:rgba(255,255,255,0.35);"></div>
<svg class="r" style="left:59px;top:835px" width="10" height="6" viewBox="0 0 10 6"><path d="M0 0 H10 L5 5.5 Z" fill="#eba4a4"/></svg>
</div>
<div class="r" style="left:589px;top:46px;width:21px;height:871px;background:#f0f0f0;"></div>
<div class="r" style="left:589px;top:67px;width:21px;height:467px;background:#cdcdcd;"></div>
<svg class="r" style="left:594px;top:53px" width="11" height="9" viewBox="0 0 11 9"><path d="M1 7.5 L5.5 2 L10 7.5" fill="none" stroke="#9a9a9a" stroke-width="1.6"/></svg>
<svg class="r" style="left:594px;top:903px" width="11" height="9" viewBox="0 0 11 9"><path d="M1 1.5 L5.5 7 L10 1.5" fill="none" stroke="#9a9a9a" stroke-width="1.6"/></svg>
<div class="r" style="left:8px;top:917px;width:602px;height:21px;background:#f0f0f0;"></div>
<svg class="r" style="left:14px;top:922px" width="9" height="11" viewBox="0 0 9 11"><path d="M7 1 L2 5.5 L7 10" fill="none" stroke="#c8c8c8" stroke-width="1.4"/></svg>
<svg class="r" style="left:574px;top:922px" width="9" height="11" viewBox="0 0 9 11"><path d="M2 1 L7 5.5 L2 10" fill="none" stroke="#c8c8c8" stroke-width="1.4"/></svg>
<div class="r" style="left:618px;top:4px;width:4px;height:942px;background:#b4b4b4;"></div>
<svg class="r" style="left:624px;top:13px" width="14" height="14" viewBox="0 0 14 14"><path d="M12.3 2 L12.3 12.3 L2 12.3 Z" fill="#b4b4b4" stroke="#7c7c7c" stroke-width="1.3" stroke-linejoin="round"/></svg>
<div class="r" style="left:638px;top:7px;width:737px;height:27px;box-sizing:border-box;border:1px solid #c2c2c2;background:#ebebeb;"></div>
<div class="t" style="top:10.56px;font-size:18px;line-height:18px;color:#000;font-weight:bold;letter-spacing:-0.1px;left:641px;">Table Preview</div>
<div class="r" style="left:639px;top:38px;width:225px;height:25px;box-sizing:border-box;border:1px solid #6f6f6f;background:#dddddd;"></div>
<div class="t" style="top:44.10px;font-size:15px;line-height:15px;color:#161616;letter-spacing:0.1px;left:351.5px;width:800px;text-align:center;">Auto-detect tables</div>
<div class="r" style="left:639px;top:68px;width:225px;height:25px;box-sizing:border-box;border:1px solid #6f6f6f;background:#dddddd;"></div>
<div class="t" style="top:74.10px;font-size:15px;line-height:15px;color:#161616;left:351.5px;width:800px;text-align:center;">Ignore all tables</div>
<svg class="r" style="left:869.5px;top:39.5px" width="16" height="16" viewBox="0 0 16 16"><circle cx="8" cy="8" r="7" fill="#fff" stroke="#3a3a3a" stroke-width="1"/></svg>
<svg class="r" style="left:869.5px;top:59.5px" width="16" height="16" viewBox="0 0 16 16"><circle cx="8" cy="8" r="7" fill="#fff" stroke="#3a3a3a" stroke-width="1"/></svg>
<svg class="r" style="left:869.5px;top:78.5px" width="16" height="16" viewBox="0 0 16 16"><circle cx="8" cy="8" r="7" fill="#fff" stroke="#3a3a3a" stroke-width="1"/><circle cx="8" cy="8" r="3.8" fill="#1e1e1e"/></svg>
<div class="t" style="top:39.90px;font-size:15px;line-height:15px;color:#161616;letter-spacing:-0.05px;left:893px;">Concatenate all tables into one</div>
<div class="t" style="top:60.20px;font-size:15px;line-height:15px;color:#161616;left:893px;">Individual tables</div>
<div class="t" style="top:78.90px;font-size:15px;line-height:15px;color:#161616;letter-spacing:-0.04px;left:893px;">Concatenate tables with matching column names</div>
<div class="r" style="left:1225px;top:41px;width:16px;height:15px;box-sizing:border-box;border:1px solid #606060;background:#fff;"></div>
<svg class="r" style="left:1225px;top:41px" width="16" height="15" viewBox="0 0 16 15"><path d="M2.3 6.6 L6.6 11.6 L13.6 2" fill="none" stroke="#222" stroke-width="2.6"/></svg>
<div class="t" style="top:40.90px;font-size:15px;line-height:15px;color:#161616;letter-spacing:0.12px;left:1247px;">Horizontal layout</div>
<div class="t" style="top:104.00px;font-size:15px;line-height:15px;color:#161616;letter-spacing:0.3px;left:641.8px;">Minimum column count</div>
<div class="t" style="top:134.00px;font-size:15px;line-height:15px;color:#161616;letter-spacing:0.32px;left:641.8px;">Minimum row count</div>
<div class="t" style="top:163.80px;font-size:15px;line-height:15px;color:#161616;letter-spacing:0.1px;left:642px;">Number of data tables</div>
<div class="t" style="top:163.80px;font-size:15px;line-height:15px;color:#161616;left:54px;width:800px;text-align:right;">1</div>
<div class="r" style="left:810px;top:102px;width:31px;height:23px;box-sizing:border-box;border:1px solid #6a6a6a;background:#fff;"></div>
<div class="t" style="top:104.30px;font-size:15px;line-height:15px;color:#161616;left:34px;width:800px;text-align:right;">2</div>
<div class="r" style="left:842px;top:102px;width:19px;height:11px;box-sizing:border-box;border:1px solid #b9cbe3;border-radius:2px;background:linear-gradient(#f3f6fb,#dde6f2);"></div>
<div class="r" style="left:842px;top:114px;width:19px;height:11px;box-sizing:border-box;border:1px solid #b9cbe3;border-radius:2px;background:linear-gradient(#f3f6fb,#dde6f2);"></div>
<svg class="r" style="left:847px;top:105px" width="8" height="5" viewBox="0 0 8 5"><path d="M0.5 4.5 L4 0.5 L7.5 4.5 Z" fill="#1f3050"/></svg>
<svg class="r" style="left:847px;top:117px" width="8" height="5" viewBox="0 0 8 5"><path d="M0.5 0.5 L4 4.5 L7.5 0.5 Z" fill="#1f3050"/></svg>
<div class="r" style="left:810px;top:132px;width:31px;height:23px;box-sizing:border-box;border:1px solid #6a6a6a;background:#fff;"></div>
<div class="t" style="top:134.30px;font-size:15px;line-height:15px;color:#161616;left:34px;width:800px;text-align:right;">3</div>
<div class="r" style="left:842px;top:132px;width:19px;height:11px;box-sizing:border-box;border:1px solid #b9cbe3;border-radius:2px;background:linear-gradient(#f3f6fb,#dde6f2);"></div>
<div class="r" style="left:842px;top:144px;width:19px;height:11px;box-sizing:border-box;border:1px solid #b9cbe3;border-radius:2px;background:linear-gradient(#f3f6fb,#dde6f2);"></div>
<svg class="r" style="left:847px;top:135px" width="8" height="5" viewBox="0 0 8 5"><path d="M0.5 4.5 L4 0.5 L7.5 4.5 Z" fill="#1f3050"/></svg>
<svg class="r" style="left:847px;top:147px" width="8" height="5" viewBox="0 0 8 5"><path d="M0.5 0.5 L4 4.5 L7.5 0.5 Z" fill="#1f3050"/></svg>
<div class="r" style="left:637px;top:188px;width:736px;height:754px;box-sizing:border-box;border:1px solid #a2a2a2;background:#f7f7f7;"></div>
<div class="r" style="left:937px;top:195px;width:146px;height:29px;box-sizing:border-box;border:1px solid #adadad;background:linear-gradient(#f0f0f0,#e5e5e5);"></div>
<div class="t" style="top:202.10px;font-size:15px;line-height:15px;color:#161616;letter-spacing:-0.35px;left:945.5px;">Page(1)&nbsp; Table(1)</div>
<svg class="r" style="left:1067px;top:205px" width="9" height="7" viewBox="0 0 9 7"><path d="M1 1.5 L4.5 5 L8 1.5" fill="none" stroke="#555" stroke-width="1.2"/></svg>
<div class="r" style="left:639px;top:226px;width:732px;height:1px;background:#b8b8b8;"></div>
<div class="r" style="left:642px;top:229px;width:728px;height:5px;background:#7a7a7a;"></div>
<svg class="r" style="left:642px;top:234px" width="106" height="49" viewBox="0 0 106 49"><line x1="8" y1="0" x2="105" y2="48" stroke="#a8a8a8" stroke-width="1"/></svg>
<div class="r" style="left:724px;top:257px;width:1px;height:13px;background:#8aa0c8;"></div>
<div class="r" style="left:725px;top:258px;width:8px;height:2px;background:#93a88f;"></div>
<div class="r" style="left:725px;top:262px;width:12px;height:2px;background:#93a88f;"></div>
<div class="r" style="left:725px;top:266px;width:6px;height:2px;background:#93a88f;"></div>
<div class="r" style="left:748px;top:283px;width:602px;height:633px;background:#fff;"></div>
<div class="r" style="left:642px;top:282px;width:708px;height:1px;background:#a8a8a8;"></div>
<div class="r" style="left:747px;top:234px;width:1px;height:682px;background:#a8a8a8;"></div>
<div class="r" style="left:807px;top:234px;width:1px;height:48px;background:#b8b8b8;"></div>
<div class="r" style="left:807px;top:283px;width:1px;height:633px;background:#d6d6e2;"></div>
<div class="r" style="left:867px;top:234px;width:1px;height:48px;background:#b8b8b8;"></div>
<div class="r" style="left:867px;top:283px;width:1px;height:633px;background:#d6d6e2;"></div>
<div class="r" style="left:1183px;top:234px;width:1px;height:48px;background:#b8b8b8;"></div>
<div class="r" style="left:1183px;top:283px;width:1px;height:633px;background:#d6d6e2;"></div>
<div class="t" style="top:263.20px;font-size:15px;line-height:15px;color:#161616;font-weight:bold;left:377px;width:800px;text-align:center;">Page</div>
<div class="t" style="top:263.20px;font-size:15px;line-height:15px;color:#161616;font-weight:bold;left:436.5px;width:800px;text-align:center;">Table</div>
<div class="t" style="top:263.10px;font-size:15px;line-height:15px;color:#161616;font-weight:bold;letter-spacing:-0.41px;left:872px;">COST OF FOOD DISTRIBUTION PROGRAMS</div>
<div class="t" style="top:242.70px;font-size:15px;line-height:15px;color:#161616;font-weight:bold;letter-spacing:-0.6px;left:549px;width:799.4px;text-align:right;">COST OF FOOD DISTRI</div>
<div class="t" style="top:262.90px;font-size:15px;line-height:15px;color:#161616;font-weight:bold;left:549px;width:800px;text-align:right;">2</div>
<div class="r" style="left:642px;top:283px;width:708px;height:633px;overflow:hidden">
<div class="r" style="left:0px;top:23px;width:105px;height:1px;background:#a8a8a8;"></div>
<div class="r" style="left:106px;top:23px;width:602px;height:1px;background:#d6d6e2;"></div>
<div class="t" style="top:2.80px;font-size:15px;line-height:15px;color:#161616;left:-703px;width:800px;text-align:right;">1</div>
<div class="t" style="top:2.80px;font-size:15px;line-height:15px;color:#161616;left:-643px;width:800px;text-align:right;">1</div>
<div class="t" style="top:2.80px;font-size:15px;line-height:15px;color:#161616;left:-583px;width:800px;text-align:right;">1</div>
<div class="t" style="top:2.80px;font-size:15px;line-height:15px;color:#161616;letter-spacing:-0.2px;left:230px;">(Data as of March 08, 2019)</div>
<div class="t" style="top:2.80px;font-size:15px;line-height:15px;color:#161616;letter-spacing:-0.2px;left:546px;">(Data as of March 08, 2019)</div>
<div class="r" style="left:0px;top:46px;width:105px;height:1px;background:#a8a8a8;"></div>
<div class="r" style="left:106px;top:46px;width:602px;height:1px;background:#d6d6e2;"></div>
<div class="t" style="top:26.80px;font-size:15px;line-height:15px;color:#161616;left:-703px;width:800px;text-align:right;">2</div>
<div class="t" style="top:26.80px;font-size:15px;line-height:15px;color:#161616;left:-643px;width:800px;text-align:right;">1</div>
<div class="t" style="top:26.80px;font-size:15px;line-height:15px;color:#161616;left:-583px;width:800px;text-align:right;">1</div>
<div class="t" style="top:26.80px;font-size:15px;line-height:15px;color:#161616;letter-spacing:-0.2px;left:546px;">Nutrition</div>
<div class="r" style="left:0px;top:70px;width:105px;height:1px;background:#a8a8a8;"></div>
<div class="r" style="left:106px;top:70px;width:602px;height:1px;background:#d6d6e2;"></div>
<div class="t" style="top:49.80px;font-size:15px;line-height:15px;color:#161616;left:-703px;width:800px;text-align:right;">3</div>
<div class="t" style="top:49.80px;font-size:15px;line-height:15px;color:#161616;left:-643px;width:800px;text-align:right;">1</div>
<div class="t" style="top:49.80px;font-size:15px;line-height:15px;color:#161616;left:-583px;width:800px;text-align:right;">1</div>
<div class="t" style="top:49.80px;font-size:15px;line-height:15px;color:#161616;letter-spacing:-0.2px;left:546px;">Services</div>
<div class="r" style="left:0px;top:94px;width:105px;height:1px;background:#a8a8a8;"></div>
<div class="r" style="left:106px;top:94px;width:602px;height:1px;background:#d6d6e2;"></div>
<div class="t" style="top:73.80px;font-size:15px;line-height:15px;color:#161616;left:-703px;width:800px;text-align:right;">4</div>
<div class="t" style="top:73.80px;font-size:15px;line-height:15px;color:#161616;left:-643px;width:800px;text-align:right;">1</div>
<div class="t" style="top:73.80px;font-size:15px;line-height:15px;color:#161616;left:-583px;width:800px;text-align:right;">1</div>
<div class="t" style="top:73.80px;font-size:15px;line-height:15px;color:#161616;letter-spacing:-0.2px;left:230px;">Fiscal</div>
<div class="t" style="top:73.80px;font-size:15px;line-height:15px;color:#161616;letter-spacing:-0.2px;left:546px;">Incentive</div>
<div class="r" style="left:0px;top:118px;width:105px;height:1px;background:#a8a8a8;"></div>
<div class="r" style="left:106px;top:118px;width:602px;height:1px;background:#d6d6e2;"></div>
<div class="t" style="top:97.80px;font-size:15px;line-height:15px;color:#161616;left:-703px;width:800px;text-align:right;">5</div>
<div class="t" style="top:97.80px;font-size:15px;line-height:15px;color:#161616;left:-643px;width:800px;text-align:right;">1</div>
<div class="t" style="top:97.80px;font-size:15px;line-height:15px;color:#161616;left:-583px;width:800px;text-align:right;">1</div>
<div class="t" style="top:97.80px;font-size:15px;line-height:15px;color:#161616;letter-spacing:-0.2px;left:230px;">Year</div>
<div class="t" style="top:97.80px;font-size:15px;line-height:15px;color:#161616;letter-spacing:-0.2px;left:546px;">Prog. 1]</div>
<div class="r" style="left:0px;top:141px;width:105px;height:1px;background:#a8a8a8;"></div>
<div class="r" style="left:106px;top:141px;width:602px;height:1px;background:#d6d6e2;"></div>
<div class="t" style="top:121.80px;font-size:15px;line-height:15px;color:#161616;left:-703px;width:800px;text-align:right;">6</div>
<div class="t" style="top:121.80px;font-size:15px;line-height:15px;color:#161616;left:-643px;width:800px;text-align:right;">1</div>
<div class="t" style="top:121.80px;font-size:15px;line-height:15px;color:#161616;left:-583px;width:800px;text-align:right;">1</div>
<div class="t" style="top:121.80px;font-size:15px;line-height:15px;color:#161616;letter-spacing:1.0px;left:241.5px;">----------------------------------</div>
<div class="t" style="top:121.80px;font-size:15px;line-height:15px;color:#161616;letter-spacing:0.3px;left:444px;">Millions of …</div>
<div class="t" style="top:121.80px;font-size:15px;line-height:15px;color:#161616;letter-spacing:1.0px;left:557px;">------------------------------</div>
<div class="r" style="left:0px;top:165px;width:105px;height:1px;background:#a8a8a8;"></div>
<div class="r" style="left:106px;top:165px;width:602px;height:1px;background:#d6d6e2;"></div>
<div class="t" style="top:144.80px;font-size:15px;line-height:15px;color:#161616;left:-703px;width:800px;text-align:right;">7</div>
<div class="t" style="top:144.80px;font-size:15px;line-height:15px;color:#161616;left:-643px;width:800px;text-align:right;">1</div>
<div class="t" style="top:144.80px;font-size:15px;line-height:15px;color:#161616;left:-583px;width:800px;text-align:right;">1</div>
<div class="t" style="top:144.80px;font-size:15px;line-height:15px;color:#161616;letter-spacing:-0.2px;left:230px;">1969</div>
<div class="t" style="top:144.80px;font-size:15px;line-height:15px;color:#161616;letter-spacing:-0.2px;left:546px;">--</div>
<div class="r" style="left:0px;top:189px;width:105px;height:1px;background:#a8a8a8;"></div>
<div class="r" style="left:106px;top:189px;width:602px;height:1px;background:#d6d6e2;"></div>
<div class="t" style="top:168.80px;font-size:15px;line-height:15px;color:#161616;left:-703px;width:800px;text-align:right;">8</div>
<div class="t" style="top:168.80px;font-size:15px;line-height:15px;color:#161616;left:-643px;width:800px;text-align:right;">1</div>
<div class="t" style="top:168.80px;font-size:15px;line-height:15px;color:#161616;left:-583px;width:800px;text-align:right;">1</div>
<div class="t" style="top:168.80px;font-size:15px;line-height:15px;color:#161616;letter-spacing:-0.2px;left:230px;">1970</div>
<div class="t" style="top:168.80px;font-size:15px;line-height:15px;color:#161616;letter-spacing:-0.2px;left:546px;">--</div>
<div class="r" style="left:0px;top:213px;width:105px;height:1px;background:#a8a8a8;"></div>
<div class="r" style="left:106px;top:213px;width:602px;height:1px;background:#d6d6e2;"></div>
<div class="t" style="top:192.80px;font-size:15px;line-height:15px;color:#161616;left:-703px;width:800px;text-align:right;">9</div>
<div class="t" style="top:192.80px;font-size:15px;line-height:15px;color:#161616;left:-643px;width:800px;text-align:right;">1</div>
<div class="t" style="top:192.80px;font-size:15px;line-height:15px;color:#161616;left:-583px;width:800px;text-align:right;">1</div>
<div class="t" style="top:192.80px;font-size:15px;line-height:15px;color:#161616;letter-spacing:-0.2px;left:230px;">1971</div>
<div class="t" style="top:192.80px;font-size:15px;line-height:15px;color:#161616;letter-spacing:-0.2px;left:546px;">--</div>
<div class="r" style="left:0px;top:236px;width:105px;height:1px;background:#a8a8a8;"></div>
<div class="r" style="left:106px;top:236px;width:602px;height:1px;background:#d6d6e2;"></div>
<div class="t" style="top:216.80px;font-size:15px;line-height:15px;color:#161616;left:-703px;width:800px;text-align:right;">10</div>
<div class="t" style="top:216.80px;font-size:15px;line-height:15px;color:#161616;left:-643px;width:800px;text-align:right;">1</div>
<div class="t" style="top:216.80px;font-size:15px;line-height:15px;color:#161616;left:-583px;width:800px;text-align:right;">1</div>
<div class="t" style="top:216.80px;font-size:15px;line-height:15px;color:#161616;letter-spacing:-0.2px;left:230px;">1972</div>
<div class="t" style="top:216.80px;font-size:15px;line-height:15px;color:#161616;letter-spacing:-0.2px;left:546px;">--</div>
<div class="r" style="left:0px;top:260px;width:105px;height:1px;background:#a8a8a8;"></div>
<div class="r" style="left:106px;top:260px;width:602px;height:1px;background:#d6d6e2;"></div>
<div class="t" style="top:239.80px;font-size:15px;line-height:15px;color:#161616;left:-703px;width:800px;text-align:right;">11</div>
<div class="t" style="top:239.80px;font-size:15px;line-height:15px;color:#161616;left:-643px;width:800px;text-align:right;">1</div>
<div class="t" style="top:239.80px;font-size:15px;line-height:15px;color:#161616;left:-583px;width:800px;text-align:right;">1</div>
<div class="t" style="top:239.80px;font-size:15px;line-height:15px;color:#161616;letter-spacing:-0.2px;left:230px;">1973</div>
<div class="t" style="top:239.80px;font-size:15px;line-height:15px;color:#161616;letter-spacing:-0.2px;left:546px;">--</div>
<div class="r" style="left:0px;top:284px;width:105px;height:1px;background:#a8a8a8;"></div>
<div class="r" style="left:106px;top:284px;width:602px;height:1px;background:#d6d6e2;"></div>
<div class="t" style="top:263.80px;font-size:15px;line-height:15px;color:#161616;left:-703px;width:800px;text-align:right;">12</div>
<div class="t" style="top:263.80px;font-size:15px;line-height:15px;color:#161616;left:-643px;width:800px;text-align:right;">1</div>
<div class="t" style="top:263.80px;font-size:15px;line-height:15px;color:#161616;left:-583px;width:800px;text-align:right;">1</div>
<div class="t" style="top:263.80px;font-size:15px;line-height:15px;color:#161616;letter-spacing:-0.2px;left:230px;">1974</div>
<div class="t" style="top:263.80px;font-size:15px;line-height:15px;color:#161616;letter-spacing:-0.2px;left:546px;">--</div>
<div class="r" style="left:0px;top:308px;width:105px;height:1px;background:#a8a8a8;"></div>
<div class="r" style="left:106px;top:308px;width:602px;height:1px;background:#d6d6e2;"></div>
<div class="t" style="top:287.80px;font-size:15px;line-height:15px;color:#161616;left:-703px;width:800px;text-align:right;">13</div>
<div class="t" style="top:287.80px;font-size:15px;line-height:15px;color:#161616;left:-643px;width:800px;text-align:right;">1</div>
<div class="t" style="top:287.80px;font-size:15px;line-height:15px;color:#161616;left:-583px;width:800px;text-align:right;">1</div>
<div class="t" style="top:287.80px;font-size:15px;line-height:15px;color:#161616;letter-spacing:-0.2px;left:230px;">1975</div>
<div class="t" style="top:287.80px;font-size:15px;line-height:15px;color:#161616;letter-spacing:-0.2px;left:546px;">1.8</div>
<div class="r" style="left:0px;top:331px;width:105px;height:1px;background:#a8a8a8;"></div>
<div class="r" style="left:106px;top:331px;width:602px;height:1px;background:#d6d6e2;"></div>
<div class="t" style="top:311.80px;font-size:15px;line-height:15px;color:#161616;left:-703px;width:800px;text-align:right;">14</div>
<div class="t" style="top:311.80px;font-size:15px;line-height:15px;color:#161616;left:-643px;width:800px;text-align:right;">1</div>
<div class="t" style="top:311.80px;font-size:15px;line-height:15px;color:#161616;left:-583px;width:800px;text-align:right;">1</div>
<div class="t" style="top:311.80px;font-size:15px;line-height:15px;color:#161616;letter-spacing:-0.2px;left:230px;">1976</div>
<div class="t" style="top:311.80px;font-size:15px;line-height:15px;color:#161616;letter-spacing:-0.2px;left:546px;">8.7</div>
<div class="r" style="left:0px;top:355px;width:105px;height:1px;background:#a8a8a8;"></div>
<div class="r" style="left:106px;top:355px;width:602px;height:1px;background:#d6d6e2;"></div>
<div class="t" style="top:334.80px;font-size:15px;line-height:15px;color:#161616;left:-703px;width:800px;text-align:right;">15</div>
<div class="t" style="top:334.80px;font-size:15px;line-height:15px;color:#161616;left:-643px;width:800px;text-align:right;">1</div>
<div class="t" style="top:334.80px;font-size:15px;line-height:15px;color:#161616;left:-583px;width:800px;text-align:right;">1</div>
<div class="t" style="top:334.80px;font-size:15px;line-height:15px;color:#161616;letter-spacing:-0.2px;left:230px;">1977</div>
<div class="t" style="top:334.80px;font-size:15px;line-height:15px;color:#161616;letter-spacing:-0.2px;left:546px;">18.9</div>
<div class="r" style="left:0px;top:379px;width:105px;height:1px;background:#a8a8a8;"></div>
<div class="r" style="left:106px;top:379px;width:602px;height:1px;background:#d6d6e2;"></div>
<div class="t" style="top:358.80px;font-size:15px;line-height:15px;color:#161616;left:-703px;width:800px;text-align:right;">16</div>
<div class="t" style="top:358.80px;font-size:15px;line-height:15px;color:#161616;left:-643px;width:800px;text-align:right;">1</div>
<div class="t" style="top:358.80px;font-size:15px;line-height:15px;color:#161616;left:-583px;width:800px;text-align:right;">1</div>
<div class="t" style="top:358.80px;font-size:15px;line-height:15px;color:#161616;letter-spacing:-0.2px;left:230px;">1978</div>
<div class="t" style="top:358.80px;font-size:15px;line-height:15px;color:#161616;letter-spacing:-0.2px;left:546px;">37.6</div>
<div class="r" style="left:0px;top:403px;width:105px;height:1px;background:#a8a8a8;"></div>
<div class="r" style="left:106px;top:403px;width:602px;height:1px;background:#d6d6e2;"></div>
<div class="t" style="top:382.80px;font-size:15px;line-height:15px;color:#161616;left:-703px;width:800px;text-align:right;">17</div>
<div class="t" style="top:382.80px;font-size:15px;line-height:15px;color:#161616;left:-643px;width:800px;text-align:right;">1</div>
<div class="t" style="top:382.80px;font-size:15px;line-height:15px;color:#161616;left:-583px;width:800px;text-align:right;">1</div>
<div class="t" style="top:382.80px;font-size:15px;line-height:15px;color:#161616;letter-spacing:-0.2px;left:230px;">1979</div>
<div class="t" style="top:382.80px;font-size:15px;line-height:15px;color:#161616;letter-spacing:-0.2px;left:546px;">57.8</div>
<div class="r" style="left:0px;top:426px;width:105px;height:1px;background:#a8a8a8;"></div>
<div class="r" style="left:106px;top:426px;width:602px;height:1px;background:#d6d6e2;"></div>
<div class="t" style="top:406.80px;font-size:15px;line-height:15px;color:#161616;left:-703px;width:800px;text-align:right;">18</div>
<div class="t" style="top:406.80px;font-size:15px;line-height:15px;color:#161616;left:-643px;width:800px;text-align:right;">1</div>
<div class="t" style="top:406.80px;font-size:15px;line-height:15px;color:#161616;left:-583px;width:800px;text-align:right;">1</div>
<div class="t" style="top:406.80px;font-size:15px;line-height:15px;color:#161616;letter-spacing:-0.2px;left:230px;">1980</div>
<div class="t" style="top:406.80px;font-size:15px;line-height:15px;color:#161616;letter-spacing:-0.2px;left:546px;">74.9</div>
<div class="r" style="left:0px;top:450px;width:105px;height:1px;background:#a8a8a8;"></div>
<div class="r" style="left:106px;top:450px;width:602px;height:1px;background:#d6d6e2;"></div>
<div class="t" style="top:429.80px;font-size:15px;line-height:15px;color:#161616;left:-703px;width:800px;text-align:right;">19</div>
<div class="t" style="top:429.80px;font-size:15px;line-height:15px;color:#161616;left:-643px;width:800px;text-align:right;">1</div>
<div class="t" style="top:429.80px;font-size:15px;line-height:15px;color:#161616;left:-583px;width:800px;text-align:right;">1</div>
<div class="t" style="top:429.80px;font-size:15px;line-height:15px;color:#161616;letter-spacing:-0.2px;left:230px;">1981</div>
<div class="t" style="top:429.80px;font-size:15px;line-height:15px;color:#161616;letter-spacing:-0.2px;left:546px;">93.7</div>
<div class="r" style="left:0px;top:474px;width:105px;height:1px;background:#a8a8a8;"></div>
<div class="r" style="left:106px;top:474px;width:602px;height:1px;background:#d6d6e2;"></div>
<div class="t" style="top:453.80px;font-size:15px;line-height:15px;color:#161616;left:-703px;width:800px;text-align:right;">20</div>
<div class="t" style="top:453.80px;font-size:15px;line-height:15px;color:#161616;left:-643px;width:800px;text-align:right;">1</div>
<div class="t" style="top:453.80px;font-size:15px;line-height:15px;color:#161616;left:-583px;width:800px;text-align:right;">1</div>
<div class="t" style="top:453.80px;font-size:15px;line-height:15px;color:#161616;letter-spacing:-0.2px;left:230px;">1982</div>
<div class="t" style="top:453.80px;font-size:15px;line-height:15px;color:#161616;letter-spacing:-0.2px;left:546px;">101.9</div>
<div class="r" style="left:0px;top:498px;width:105px;height:1px;background:#a8a8a8;"></div>
<div class="r" style="left:106px;top:498px;width:602px;height:1px;background:#d6d6e2;"></div>
<div class="t" style="top:477.80px;font-size:15px;line-height:15px;color:#161616;left:-703px;width:800px;text-align:right;">21</div>
<div class="t" style="top:477.80px;font-size:15px;line-height:15px;color:#161616;left:-643px;width:800px;text-align:right;">1</div>
<div class="t" style="top:477.80px;font-size:15px;line-height:15px;color:#161616;left:-583px;width:800px;text-align:right;">1</div>
<div class="t" style="top:477.80px;font-size:15px;line-height:15px;color:#161616;letter-spacing:-0.2px;left:230px;">1983</div>
<div class="t" style="top:477.80px;font-size:15px;line-height:15px;color:#161616;letter-spacing:-0.2px;left:546px;">119.8</div>
<div class="r" style="left:0px;top:521px;width:105px;height:1px;background:#a8a8a8;"></div>
<div class="r" style="left:106px;top:521px;width:602px;height:1px;background:#d6d6e2;"></div>
<div class="t" style="top:501.80px;font-size:15px;line-height:15px;color:#161616;left:-703px;width:800px;text-align:right;">22</div>
<div class="t" style="top:501.80px;font-size:15px;line-height:15px;color:#161616;left:-643px;width:800px;text-align:right;">1</div>
<div class="t" style="top:501.80px;font-size:15px;line-height:15px;color:#161616;left:-583px;width:800px;text-align:right;">1</div>
<div class="t" style="top:501.80px;font-size:15px;line-height:15px;color:#161616;letter-spacing:-0.2px;left:230px;">1984</div>
<div class="t" style="top:501.80px;font-size:15px;line-height:15px;color:#161616;letter-spacing:-0.2px;left:546px;">126.6</div>
<div class="r" style="left:0px;top:545px;width:105px;height:1px;background:#a8a8a8;"></div>
<div class="r" style="left:106px;top:545px;width:602px;height:1px;background:#d6d6e2;"></div>
<div class="t" style="top:524.80px;font-size:15px;line-height:15px;color:#161616;left:-703px;width:800px;text-align:right;">23</div>
<div class="t" style="top:524.80px;font-size:15px;line-height:15px;color:#161616;left:-643px;width:800px;text-align:right;">1</div>
<div class="t" style="top:524.80px;font-size:15px;line-height:15px;color:#161616;left:-583px;width:800px;text-align:right;">1</div>
<div class="t" style="top:524.80px;font-size:15px;line-height:15px;color:#161616;letter-spacing:-0.2px;left:230px;">1985</div>
<div class="t" style="top:524.80px;font-size:15px;line-height:15px;color:#161616;letter-spacing:-0.2px;left:546px;">133.7</div>
<div class="r" style="left:0px;top:569px;width:105px;height:1px;background:#a8a8a8;"></div>
<div class="r" style="left:106px;top:569px;width:602px;height:1px;background:#d6d6e2;"></div>
<div class="t" style="top:548.80px;font-size:15px;line-height:15px;color:#161616;left:-703px;width:800px;text-align:right;">24</div>
<div class="t" style="top:548.80px;font-size:15px;line-height:15px;color:#161616;left:-643px;width:800px;text-align:right;">1</div>
<div class="t" style="top:548.80px;font-size:15px;line-height:15px;color:#161616;left:-583px;width:800px;text-align:right;">1</div>
<div class="t" style="top:548.80px;font-size:15px;line-height:15px;color:#161616;letter-spacing:-0.2px;left:230px;">1986</div>
<div class="t" style="top:548.80px;font-size:15px;line-height:15px;color:#161616;letter-spacing:-0.2px;left:546px;">137.2</div>
<div class="r" style="left:0px;top:593px;width:105px;height:1px;background:#a8a8a8;"></div>
<div class="r" style="left:106px;top:593px;width:602px;height:1px;background:#d6d6e2;"></div>
<div class="t" style="top:572.80px;font-size:15px;line-height:15px;color:#161616;left:-703px;width:800px;text-align:right;">25</div>
<div class="t" style="top:572.80px;font-size:15px;line-height:15px;color:#161616;left:-643px;width:800px;text-align:right;">1</div>
<div class="t" style="top:572.80px;font-size:15px;line-height:15px;color:#161616;left:-583px;width:800px;text-align:right;">1</div>
<div class="t" style="top:572.80px;font-size:15px;line-height:15px;color:#161616;letter-spacing:-0.2px;left:230px;">1987</div>
<div class="t" style="top:572.80px;font-size:15px;line-height:15px;color:#161616;letter-spacing:-0.2px;left:546px;">139.3</div>
<div class="r" style="left:0px;top:616px;width:105px;height:1px;background:#a8a8a8;"></div>
<div class="r" style="left:106px;top:616px;width:602px;height:1px;background:#d6d6e2;"></div>
<div class="t" style="top:596.80px;font-size:15px;line-height:15px;color:#161616;left:-703px;width:800px;text-align:right;">26</div>
<div class="t" style="top:596.80px;font-size:15px;line-height:15px;color:#161616;left:-643px;width:800px;text-align:right;">1</div>
<div class="t" style="top:596.80px;font-size:15px;line-height:15px;color:#161616;left:-583px;width:800px;text-align:right;">1</div>
<div class="t" style="top:596.80px;font-size:15px;line-height:15px;color:#161616;letter-spacing:-0.2px;left:230px;">1988</div>
<div class="t" style="top:596.80px;font-size:15px;line-height:15px;color:#161616;letter-spacing:-0.2px;left:546px;">146.1</div>
<div class="r" style="left:0px;top:640px;width:105px;height:1px;background:#a8a8a8;"></div>
<div class="r" style="left:106px;top:640px;width:602px;height:1px;background:#d6d6e2;"></div>
<div class="t" style="top:619.80px;font-size:15px;line-height:15px;color:#161616;left:-703px;width:800px;text-align:right;">27</div>
<div class="t" style="top:619.80px;font-size:15px;line-height:15px;color:#161616;left:-643px;width:800px;text-align:right;">1</div>
<div class="t" style="top:619.80px;font-size:15px;line-height:15px;color:#161616;left:-583px;width:800px;text-align:right;">1</div>
<div class="t" style="top:619.80px;font-size:15px;line-height:15px;color:#161616;letter-spacing:-0.2px;left:230px;">1989</div>
<div class="t" style="top:619.80px;font-size:15px;line-height:15px;color:#161616;letter-spacing:-0.2px;left:546px;">144.4</div>
</div>
<div class="r" style="left:1350px;top:283px;width:21px;height:633px;background:#f0f0f0;"></div>
<div class="r" style="left:1350px;top:303px;width:21px;height:272px;background:#cdcdcd;"></div>
<svg class="r" style="left:1355px;top:289px" width="11" height="9" viewBox="0 0 11 9"><path d="M1 7.5 L5.5 2 L10 7.5" fill="none" stroke="#a0a0a0" stroke-width="1.6"/></svg>
<svg class="r" style="left:1355px;top:902px" width="11" height="9" viewBox="0 0 11 9"><path d="M1 1.5 L5.5 7 L10 1.5" fill="none" stroke="#a0a0a0" stroke-width="1.6"/></svg>
<div class="r" style="left:747px;top:916px;width:624px;height:21px;background:#f0f0f0;"></div>
<div class="r" style="left:768px;top:916px;width:136px;height:21px;background:#cdcdcd;"></div>
<svg class="r" style="left:753px;top:921px" width="9" height="11" viewBox="0 0 9 11"><path d="M7 1 L2 5.5 L7 10" fill="none" stroke="#a0a0a0" stroke-width="1.6"/></svg>
<svg class="r" style="left:1336px;top:921px" width="9" height="11" viewBox="0 0 9 11"><path d="M2 1 L7 5.5 L2 10" fill="none" stroke="#a0a0a0" stroke-width="1.6"/></svg>
<div class="r" style="left:1139px;top:952px;width:75px;height:25px;box-sizing:border-box;border:1px solid #0078d7;background:#e1e1e1;"></div>
<div class="t" style="top:957.90px;font-size:15px;line-height:15px;color:#161616;left:776.5px;width:800px;text-align:center;">OK</div>
<div class="r" style="left:1219px;top:952px;width:75px;height:25px;box-sizing:border-box;border:1px solid #adadad;background:#e1e1e1;"></div>
<div class="t" style="top:957.90px;font-size:15px;line-height:15px;color:#161616;letter-spacing:-0.1px;left:856.5px;width:800px;text-align:center;">Cancel</div>
<div class="r" style="left:1299px;top:952px;width:75px;height:25px;box-sizing:border-box;border:1px solid #adadad;background:#e1e1e1;"></div>
<div class="t" style="top:957.90px;font-size:15px;line-height:15px;color:#161616;left:936.5px;width:800px;text-align:center;">Help</div>
</body></html>
